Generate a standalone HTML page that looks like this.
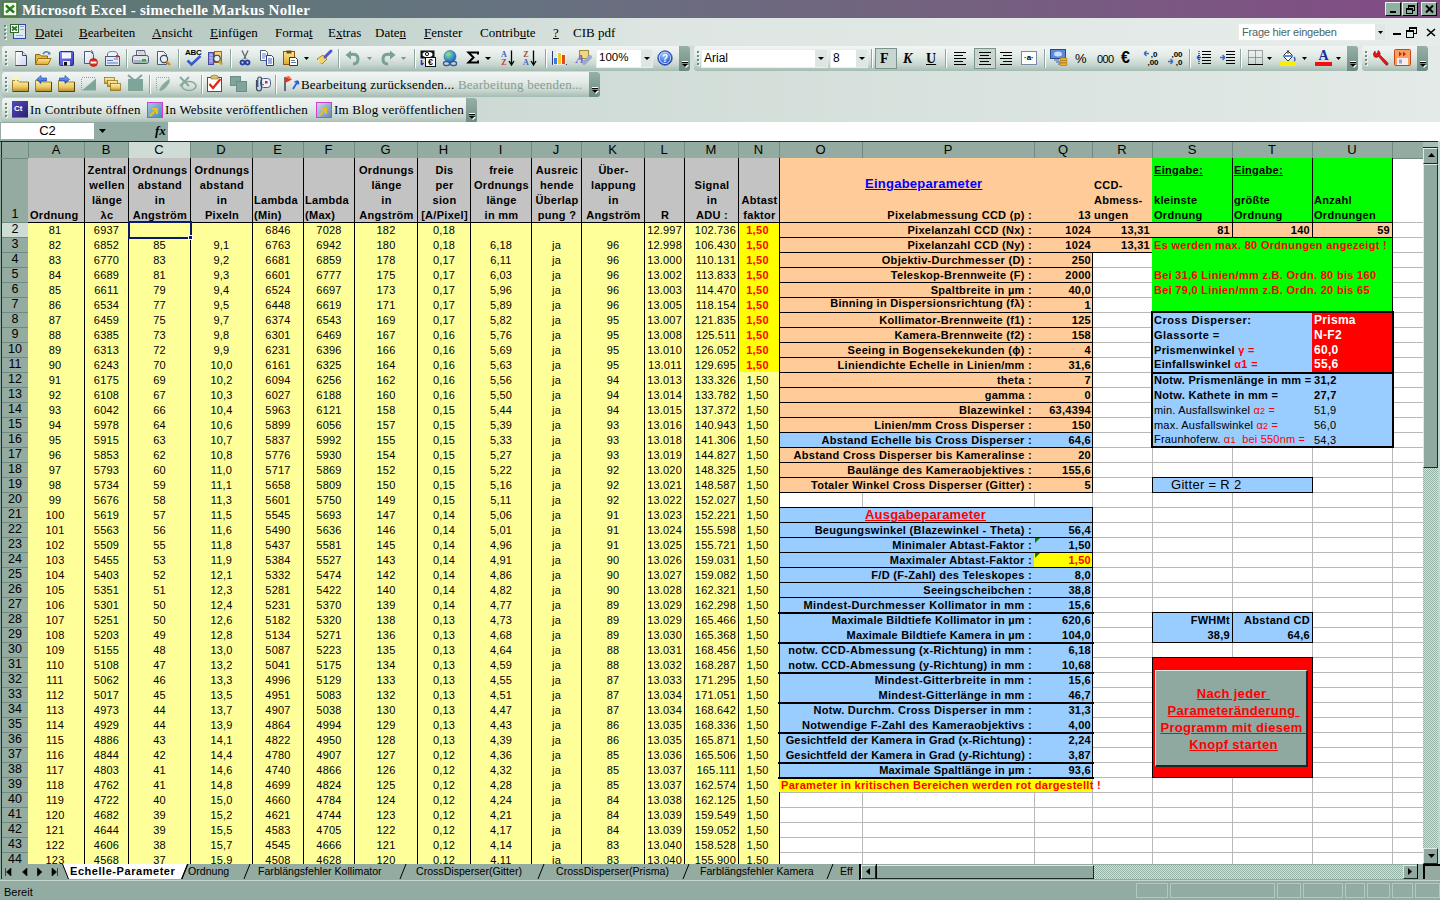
<!DOCTYPE html><html><head><meta charset="utf-8"><title>Excel</title><style>
*{margin:0;padding:0;box-sizing:border-box}
html,body{width:1440px;height:900px;overflow:hidden;background:#dfe7e3}
body{position:relative;font-family:"Liberation Sans",sans-serif;font-size:11px;color:#000}
div{position:absolute}
.t{height:15px;line-height:15px;white-space:nowrap;overflow:visible;letter-spacing:0.2px;margin-top:1px}
.b{font-weight:bold;letter-spacing:0.3px}
.ser{font-family:"Liberation Serif",serif}
.hdr{font-size:13px;text-align:center;height:17px;line-height:17px}
u{text-decoration:underline}
svg{position:absolute;overflow:visible}
</style></head><body>
<div style="left:0;top:0;width:1440px;height:18px;background:linear-gradient(90deg,#5b7a73 0%,#667280 35%,#73627f 65%,#834b85 100%)"></div>
<svg style="left:2px;top:1px" width="16" height="16"><rect x="1" y="1" width="14" height="14" fill="#f4fbef" stroke="#4a7a2a" stroke-width="1.6"/><path d="M4 4.5 L12 11.5 M12 4.5 L4 11.5" stroke="#2f8a2f" stroke-width="2.6"/><path d="M4 4.5 L12 11.5" stroke="#1e5e1e" stroke-width="1"/></svg>
<div class="ser" style="left:22px;top:1px;height:19px;line-height:19px;font-size:15px;font-weight:bold;color:#fff;letter-spacing:0.25px;white-space:nowrap">Microsoft Excel - simechelle Markus Noller</div>
<div style="left:1385px;top:2px;width:16px;height:14px;background:#8fb0a1;border-top:1px solid #e8f0ec;border-left:1px solid #e8f0ec;border-right:1px solid #000;border-bottom:1px solid #000"></div>
<div style="left:1402px;top:2px;width:16px;height:14px;background:#8fb0a1;border-top:1px solid #e8f0ec;border-left:1px solid #e8f0ec;border-right:1px solid #000;border-bottom:1px solid #000"></div>
<div style="left:1421px;top:2px;width:16px;height:14px;background:#8fb0a1;border-top:1px solid #e8f0ec;border-left:1px solid #e8f0ec;border-right:1px solid #000;border-bottom:1px solid #000"></div>
<div style="left:1390px;top:11px;width:6px;height:2px;background:#000"></div>
<svg style="left:1406px;top:5px" width="9" height="9"><rect x="2.5" y="0.5" width="6" height="5" fill="none" stroke="#000"/><rect x="0.5" y="3.5" width="6" height="5" fill="#8fb0a1" stroke="#000"/><path d="M2.5 1.5h6M0.5 4.5h6" stroke="#000"/></svg>
<svg style="left:1425px;top:5px" width="9" height="8"><path d="M1 0.5 L8 7.5 M8 0.5 L1 7.5" stroke="#000" stroke-width="2"/></svg>
<div style="left:0;top:19px;width:1440px;height:103px;background:linear-gradient(90deg,#bccdc6 0%,#d0dcd7 40%,#e3eae7 100%)"></div>
<div style="left:0;top:18px;width:1440px;height:28px;background:linear-gradient(90deg,#aec2b9 0%,#c4d3cd 25%,#dde6e2 45%,#e6ecea 100%)"></div>
<div style="left:5px;top:26px;width:2px;height:2px;background:#f4f8f6"></div>
<div style="left:4px;top:25px;width:2px;height:2px;background:#6f8c84"></div>
<div style="left:5px;top:30px;width:2px;height:2px;background:#f4f8f6"></div>
<div style="left:4px;top:29px;width:2px;height:2px;background:#6f8c84"></div>
<div style="left:5px;top:34px;width:2px;height:2px;background:#f4f8f6"></div>
<div style="left:4px;top:33px;width:2px;height:2px;background:#6f8c84"></div>
<div style="left:5px;top:38px;width:2px;height:2px;background:#f4f8f6"></div>
<div style="left:4px;top:37px;width:2px;height:2px;background:#6f8c84"></div>
<div style="left:13px;top:24px;width:13px;height:15px;background:#dfe6f8;border:1px solid #3346a0"></div>
<div style="left:10px;top:24px;width:9px;height:9px;background:#fff;border:1px solid #2d6a2d"></div>
<svg style="left:11px;top:25px" width="7" height="7"><path d="M1 1.5 L6 5.5 M6 1.5 L1 5.5" stroke="#2a7a2a" stroke-width="2"/></svg>
<div style="left:20px;top:26px;width:4px;height:1px;background:#a0a8d8"></div><div style="left:20px;top:29px;width:4px;height:1px;background:#a0a8d8"></div><div style="left:16px;top:35px;width:7px;height:1px;background:#a0a8d8"></div>
<div class="ser" style="left:35px;top:24px;height:17px;line-height:17px;font-size:13px;white-space:nowrap"><u>D</u>atei</div>
<div class="ser" style="left:79px;top:24px;height:17px;line-height:17px;font-size:13px;white-space:nowrap"><u>B</u>earbeiten</div>
<div class="ser" style="left:152px;top:24px;height:17px;line-height:17px;font-size:13px;white-space:nowrap"><u>A</u>nsicht</div>
<div class="ser" style="left:210px;top:24px;height:17px;line-height:17px;font-size:13px;white-space:nowrap"><u>E</u>infügen</div>
<div class="ser" style="left:275px;top:24px;height:17px;line-height:17px;font-size:13px;white-space:nowrap">Forma<u>t</u></div>
<div class="ser" style="left:328px;top:24px;height:17px;line-height:17px;font-size:13px;white-space:nowrap">E<u>x</u>tras</div>
<div class="ser" style="left:375px;top:24px;height:17px;line-height:17px;font-size:13px;white-space:nowrap">Date<u>n</u></div>
<div class="ser" style="left:424px;top:24px;height:17px;line-height:17px;font-size:13px;white-space:nowrap"><u>F</u>enster</div>
<div class="ser" style="left:480px;top:24px;height:17px;line-height:17px;font-size:13px;white-space:nowrap">Contrib<u>u</u>te</div>
<div class="ser" style="left:553px;top:24px;height:17px;line-height:17px;font-size:13px;white-space:nowrap"><u>?</u></div>
<div class="ser" style="left:573px;top:24px;height:17px;line-height:17px;font-size:13px;white-space:nowrap">CIB pdf</div>
<div style="left:1238px;top:23px;width:148px;height:18px;background:#fff;border:1px solid #e8eeeb"></div>
<div style="left:1375px;top:24px;width:10px;height:16px;background:#e0e8e4"></div>
<div style="left:1242px;top:23px;height:18px;line-height:18px;font-size:11px;letter-spacing:-0.2px;color:#4d6660;white-space:nowrap">Frage hier eingeben</div>
<svg style="left:1378px;top:31px" width="5" height="3"><path d="M0 0h5L2.5 3z" fill="#000"/></svg>
<div style="left:1393px;top:33px;width:8px;height:2px;background:#000"></div>
<svg style="left:1406px;top:27px" width="11" height="11"><rect x="3.5" y="0.5" width="7" height="6" fill="none" stroke="#000"/><rect x="0.5" y="3.5" width="7" height="7" fill="#e6ecea" stroke="#000"/><path d="M3.5 1.5h7M0.5 4.5h7" stroke="#000"/></svg>
<svg style="left:1426px;top:28px" width="10" height="9"><path d="M1 1 L9 8 M9 1 L1 8" stroke="#000" stroke-width="1.6"/></svg>
<div style="left:2px;top:46px;width:688px;height:25px;border-radius:3px;background:linear-gradient(180deg,#f1f5f3 0%,#e3ebe7 40%,#c7d6cf 75%,#a4bcb2 100%)"></div>
<div style="left:679px;top:46px;width:11px;height:25px;border-radius:0 3px 3px 0;background:linear-gradient(180deg,#97b0a7,#6c8c83)"></div>
<div style="left:682px;top:61px;width:6px;height:1px;background:#fff"></div>
<div style="left:682px;top:62px;width:6px;height:1px;background:#000"></div>
<svg style="left:682px;top:64px" width="7" height="5"><path d="M1 1h6L4 4z" fill="#fff"/><path d="M0 0h6L3 3z" fill="#000"/></svg>
<div style="left:6px;top:52px;width:2px;height:2px;background:#f4f8f6"></div>
<div style="left:5px;top:51px;width:2px;height:2px;background:#6f8c84"></div>
<div style="left:6px;top:56px;width:2px;height:2px;background:#f4f8f6"></div>
<div style="left:5px;top:55px;width:2px;height:2px;background:#6f8c84"></div>
<div style="left:6px;top:60px;width:2px;height:2px;background:#f4f8f6"></div>
<div style="left:5px;top:59px;width:2px;height:2px;background:#6f8c84"></div>
<div style="left:6px;top:64px;width:2px;height:2px;background:#f4f8f6"></div>
<div style="left:5px;top:63px;width:2px;height:2px;background:#6f8c84"></div>
<div style="left:694px;top:46px;width:664px;height:25px;border-radius:3px;background:linear-gradient(180deg,#f1f5f3 0%,#e3ebe7 40%,#c7d6cf 75%,#a4bcb2 100%)"></div>
<div style="left:1347px;top:46px;width:11px;height:25px;border-radius:0 3px 3px 0;background:linear-gradient(180deg,#97b0a7,#6c8c83)"></div>
<div style="left:1350px;top:61px;width:6px;height:1px;background:#fff"></div>
<div style="left:1350px;top:62px;width:6px;height:1px;background:#000"></div>
<svg style="left:1350px;top:64px" width="7" height="5"><path d="M1 1h6L4 4z" fill="#fff"/><path d="M0 0h6L3 3z" fill="#000"/></svg>
<div style="left:698px;top:52px;width:2px;height:2px;background:#f4f8f6"></div>
<div style="left:697px;top:51px;width:2px;height:2px;background:#6f8c84"></div>
<div style="left:698px;top:56px;width:2px;height:2px;background:#f4f8f6"></div>
<div style="left:697px;top:55px;width:2px;height:2px;background:#6f8c84"></div>
<div style="left:698px;top:60px;width:2px;height:2px;background:#f4f8f6"></div>
<div style="left:697px;top:59px;width:2px;height:2px;background:#6f8c84"></div>
<div style="left:698px;top:64px;width:2px;height:2px;background:#f4f8f6"></div>
<div style="left:697px;top:63px;width:2px;height:2px;background:#6f8c84"></div>
<div style="left:1362px;top:46px;width:66px;height:25px;border-radius:3px;background:linear-gradient(180deg,#f1f5f3 0%,#e3ebe7 40%,#c7d6cf 75%,#a4bcb2 100%)"></div>
<div style="left:1417px;top:46px;width:11px;height:25px;border-radius:0 3px 3px 0;background:linear-gradient(180deg,#97b0a7,#6c8c83)"></div>
<div style="left:1420px;top:61px;width:6px;height:1px;background:#fff"></div>
<div style="left:1420px;top:62px;width:6px;height:1px;background:#000"></div>
<svg style="left:1420px;top:64px" width="7" height="5"><path d="M1 1h6L4 4z" fill="#fff"/><path d="M0 0h6L3 3z" fill="#000"/></svg>
<div style="left:1366px;top:52px;width:2px;height:2px;background:#f4f8f6"></div>
<div style="left:1365px;top:51px;width:2px;height:2px;background:#6f8c84"></div>
<div style="left:1366px;top:56px;width:2px;height:2px;background:#f4f8f6"></div>
<div style="left:1365px;top:55px;width:2px;height:2px;background:#6f8c84"></div>
<div style="left:1366px;top:60px;width:2px;height:2px;background:#f4f8f6"></div>
<div style="left:1365px;top:59px;width:2px;height:2px;background:#6f8c84"></div>
<div style="left:1366px;top:64px;width:2px;height:2px;background:#f4f8f6"></div>
<div style="left:1365px;top:63px;width:2px;height:2px;background:#6f8c84"></div>
<div style="left:2px;top:72px;width:598px;height:25px;border-radius:3px;background:linear-gradient(180deg,#f1f5f3 0%,#e3ebe7 40%,#c7d6cf 75%,#a4bcb2 100%)"></div>
<div style="left:589px;top:72px;width:11px;height:25px;border-radius:0 3px 3px 0;background:linear-gradient(180deg,#97b0a7,#6c8c83)"></div>
<div style="left:592px;top:87px;width:6px;height:1px;background:#fff"></div>
<div style="left:592px;top:88px;width:6px;height:1px;background:#000"></div>
<svg style="left:592px;top:90px" width="7" height="5"><path d="M1 1h6L4 4z" fill="#fff"/><path d="M0 0h6L3 3z" fill="#000"/></svg>
<div style="left:6px;top:78px;width:2px;height:2px;background:#f4f8f6"></div>
<div style="left:5px;top:77px;width:2px;height:2px;background:#6f8c84"></div>
<div style="left:6px;top:82px;width:2px;height:2px;background:#f4f8f6"></div>
<div style="left:5px;top:81px;width:2px;height:2px;background:#6f8c84"></div>
<div style="left:6px;top:86px;width:2px;height:2px;background:#f4f8f6"></div>
<div style="left:5px;top:85px;width:2px;height:2px;background:#6f8c84"></div>
<div style="left:6px;top:90px;width:2px;height:2px;background:#f4f8f6"></div>
<div style="left:5px;top:89px;width:2px;height:2px;background:#6f8c84"></div>
<div style="left:2px;top:98px;width:475px;height:25px;border-radius:3px;background:linear-gradient(180deg,#f1f5f3 0%,#e3ebe7 40%,#c7d6cf 75%,#a4bcb2 100%)"></div>
<div style="left:466px;top:98px;width:11px;height:25px;border-radius:0 3px 3px 0;background:linear-gradient(180deg,#97b0a7,#6c8c83)"></div>
<div style="left:469px;top:113px;width:6px;height:1px;background:#fff"></div>
<div style="left:469px;top:114px;width:6px;height:1px;background:#000"></div>
<svg style="left:469px;top:116px" width="7" height="5"><path d="M1 1h6L4 4z" fill="#fff"/><path d="M0 0h6L3 3z" fill="#000"/></svg>
<div style="left:6px;top:104px;width:2px;height:2px;background:#f4f8f6"></div>
<div style="left:5px;top:103px;width:2px;height:2px;background:#6f8c84"></div>
<div style="left:6px;top:108px;width:2px;height:2px;background:#f4f8f6"></div>
<div style="left:5px;top:107px;width:2px;height:2px;background:#6f8c84"></div>
<div style="left:6px;top:112px;width:2px;height:2px;background:#f4f8f6"></div>
<div style="left:5px;top:111px;width:2px;height:2px;background:#6f8c84"></div>
<div style="left:6px;top:116px;width:2px;height:2px;background:#f4f8f6"></div>
<div style="left:5px;top:115px;width:2px;height:2px;background:#6f8c84"></div>
<svg style="left:0;top:0" width="0" height="0"><defs>
<linearGradient id="gdoc" x1="0" y1="0" x2="1" y2="1"><stop offset="0" stop-color="#ffffff"/><stop offset="1" stop-color="#cdd6ea"/></linearGradient>
<linearGradient id="gfold" x1="0" y1="0" x2="0" y2="1"><stop offset="0" stop-color="#ffe890"/><stop offset="1" stop-color="#e0a828"/></linearGradient>
<linearGradient id="gblue" x1="0" y1="0" x2="1" y2="1"><stop offset="0" stop-color="#8a8aff"/><stop offset="1" stop-color="#3a3ab0"/></linearGradient>
<radialGradient id="gglobe" cx="0.35" cy="0.3" r="0.8"><stop offset="0" stop-color="#a8e070"/><stop offset="0.5" stop-color="#3aa0d0"/><stop offset="1" stop-color="#1a50a0"/></radialGradient>
<radialGradient id="ghelp" cx="0.4" cy="0.3" r="0.8"><stop offset="0" stop-color="#9ac0ff"/><stop offset="1" stop-color="#0a3ac8"/></radialGradient>
</defs></svg>
<svg style="left:14px;top:51px" width="13" height="15" viewBox="0 0 13 15"><path d="M1.5 0.5H8.5L12.5 4.5V14.5H1.5Z" fill="url(#gdoc)" stroke="#3a4a66"/><path d="M8.5 0.5V4.5H12.5" fill="#e8eef8" stroke="#3a4a66"/><path d="M2 1V14" stroke="#fff"/></svg>
<svg style="left:34px;top:50px" width="18" height="16" viewBox="0 0 18 16"><path d="M1.5 4.5H6L7.5 6H13.5V14.5H1.5Z" fill="#e8b838" stroke="#8a6818"/><path d="M4 8.5H17L14 14.5H1.5Z" fill="url(#gfold)" stroke="#9a7018"/><path d="M9 4 Q12 0 15 3" stroke="#4a7ab0" stroke-width="1.6" fill="none"/><path d="M13.5 4.5L16.5 4.5 16 1.5Z" fill="#4a7ab0"/></svg>
<svg style="left:59px;top:51px" width="15" height="15" viewBox="0 0 15 15"><rect x="0.5" y="0.5" width="14" height="14" rx="1" fill="url(#gblue)" stroke="#2a2a90"/><rect x="3" y="1.5" width="9" height="6" fill="#f4f6ff"/><rect x="4" y="10" width="7" height="4.5" fill="#e8e8f0"/><rect x="5" y="11" width="3" height="3.5" fill="#111"/></svg>
<svg style="left:83px;top:50px" width="15" height="17" viewBox="0 0 15 17"><path d="M1.5 1.5H7.5L10.5 4.5V13.5H1.5Z" fill="url(#gdoc)" stroke="#4a5a78"/><path d="M8 0.5 Q10 1 10 4" stroke="#3a4a9a" fill="none"/><circle cx="10.5" cy="12.5" r="4" fill="#e02818" stroke="#a01010" stroke-width=".6"/><rect x="7.5" y="11.5" width="6" height="2" fill="#fff"/></svg>
<svg style="left:104px;top:50px" width="17" height="17" viewBox="0 0 17 17"><path d="M3.5 6.5V4 Q3.5 1.5 8.5 1.5 Q13.5 1.5 13.5 4V6.5" fill="#eef2f8" stroke="#6a7a98"/><rect x="1.5" y="6.5" width="14" height="9" fill="#e4eaf4" stroke="#4a5a80"/><rect x="12" y="5" width="2.5" height="2.5" fill="#e02020"/><path d="M3 10.5H9M3 13H14M10 9H14" stroke="#5a78b8"/></svg>
<div style="left:126px;top:49px;width:1px;height:19px;background:#8fa9a0"></div>
<div style="left:127px;top:49px;width:1px;height:19px;background:#fff"></div>
<svg style="left:132px;top:50px" width="17" height="16" viewBox="0 0 17 16"><path d="M4.5 0.5H12.5L13.5 5.5H4.5Z" fill="#fff" stroke="#5a6478"/><path d="M5.5 2H11.5M5.5 4H12" stroke="#8a96aa" stroke-width=".8"/><rect x="0.5" y="5.5" width="16" height="8" rx="2" fill="#dfe3ea" stroke="#4a5468"/><rect x="1.5" y="10" width="14" height="3" fill="#aab2c0"/><rect x="10" y="9" width="4" height="2.5" fill="#20c020"/></svg>
<svg style="left:156px;top:50px" width="17" height="17" viewBox="0 0 17 17"><path d="M1.5 1.5H7.5L10.5 4.5V14.5H1.5Z" fill="url(#gdoc)" stroke="#4a5a78"/><circle cx="8" cy="9" r="3.6" fill="#e8eef6" stroke="#404858" stroke-width="1.2"/><path d="M10.5 11.5L14 15" stroke="#e08a18" stroke-width="2.4"/></svg>
<div style="left:178px;top:49px;width:1px;height:19px;background:#8fa9a0"></div>
<div style="left:179px;top:49px;width:1px;height:19px;background:#fff"></div>
<div style="left:185px;top:49px;font-size:8px;font-weight:bold;line-height:8px;letter-spacing:-0.3px">ABC</div>
<svg style="left:186px;top:55px" width="16" height="11" viewBox="0 0 16 11"><path d="M1.5 5.5 L5.5 9.5 L14.5 1" stroke="#3a5ad0" stroke-width="2.6" fill="none"/></svg>
<svg style="left:207px;top:49px" width="17" height="17" viewBox="0 0 17 17"><rect x="1.5" y="3.5" width="5" height="12" fill="#8a8ae8" stroke="#4848a0"/><path d="M2.5 6H5.5M2.5 9H5.5M2.5 12H5.5" stroke="#d0d0ff"/><rect x="7.5" y="2.5" width="7" height="11" fill="#f0d080" stroke="#8a7030"/><circle cx="10" cy="9.5" r="3.2" fill="#e4ecf4" stroke="#3a4050" stroke-width="1.1"/><path d="M12 12L15 15.5" stroke="#c8a020" stroke-width="2.2"/></svg>
<div style="left:230px;top:49px;width:1px;height:19px;background:#8fa9a0"></div>
<div style="left:231px;top:49px;width:1px;height:19px;background:#fff"></div>
<svg style="left:239px;top:50px" width="12" height="16" viewBox="0 0 12 16"><path d="M3 0.5L7 9M9 0.5L5 9" stroke="#6a6a78" stroke-width="1.4"/><circle cx="3.5" cy="12.5" r="2.5" fill="#3050c0" stroke="#20308a"/><circle cx="8.5" cy="12.5" r="2.5" fill="#3050c0" stroke="#20308a"/><circle cx="3.5" cy="12.5" r="0.9" fill="#dde"/><circle cx="8.5" cy="12.5" r="0.9" fill="#dde"/></svg>
<svg style="left:259px;top:50px" width="17" height="16" viewBox="0 0 17 16"><path d="M1.5 0.5H6.5L8.5 2.5V10.5H1.5Z" fill="#fff" stroke="#4a5a80"/><path d="M3 4H7M3 6H7M3 8H6" stroke="#5a78c0"/><path d="M7.5 5.5H12.5L14.5 7.5V15.5H7.5Z" fill="#fff" stroke="#2a3a90"/><path d="M9 9H13M9 11H13M9 13H13" stroke="#3a5ac8"/></svg>
<svg style="left:283px;top:50px" width="16" height="17" viewBox="0 0 16 17"><rect x="0.5" y="1.5" width="11" height="13" fill="url(#gfold)" stroke="#8a5a10"/><rect x="3.5" y="0.5" width="5" height="3" fill="#6a4a18"/><path d="M6.5 7.5H12.5L14.5 9.5V15.5H6.5Z" fill="#fff" stroke="#303848"/><path d="M8 10.5H12M8 12.5H13" stroke="#6a7890"/></svg>
<svg style="left:304px;top:57px" width="5" height="3" viewBox="0 0 5 3"><path d="M0 0h5L2.5 3z" fill="#000"/></svg>
<svg style="left:316px;top:49px" width="18" height="17" viewBox="0 0 18 17"><path d="M1 10 L7 6 L11 10 L6 15 Z" fill="#f0d468" stroke="#a88a30"/><path d="M2 11L6 14" stroke="#fff2b0"/><path d="M9 8 L15 2" stroke="#5a50c8" stroke-width="3" stroke-linecap="round"/></svg>
<div style="left:338px;top:49px;width:1px;height:19px;background:#8fa9a0"></div>
<div style="left:339px;top:49px;width:1px;height:19px;background:#fff"></div>
<svg style="left:345px;top:50px" width="16" height="15" viewBox="0 0 16 15"><path d="M5 4.5 Q13 3 13 9 Q13 14 8 14" stroke="#7aa096" stroke-width="3" fill="none"/><path d="M0.5 5 L6 0.5 L6 9.5 Z" fill="#7aa096"/></svg>
<svg style="left:367px;top:57px" width="5" height="3" viewBox="0 0 5 3"><path d="M0 0h5L2.5 3z" fill="#7a968e"/></svg>
<svg style="left:380px;top:50px" width="16" height="15" viewBox="0 0 16 15"><path d="M11 4.5 Q3 3 3 9 Q3 14 8 14" stroke="#7aa096" stroke-width="3" fill="none"/><path d="M15.5 5 L10 0.5 L10 9.5 Z" fill="#7aa096"/></svg>
<svg style="left:401px;top:57px" width="5" height="3" viewBox="0 0 5 3"><path d="M0 0h5L2.5 3z" fill="#7a968e"/></svg>
<div style="left:414px;top:49px;width:1px;height:19px;background:#8fa9a0"></div>
<div style="left:415px;top:49px;width:1px;height:19px;background:#fff"></div>
<svg style="left:419px;top:50px" width="17" height="18" viewBox="0 0 17 18"><rect x="1.5" y="0.5" width="14" height="8" fill="#111"/><ellipse cx="8.5" cy="4.5" rx="5" ry="2.8" fill="#fff"/><circle cx="8" cy="4" r="1.6" fill="none" stroke="#111"/><rect x="6.5" y="7.5" width="10" height="9" fill="#fff" stroke="#111"/><text x="11.5" y="15" font-size="9" font-weight="bold" text-anchor="middle" font-family="Liberation Sans">€</text><path d="M2.5 10V15M2.5 15L4.5 13" stroke="#2030c0" stroke-width="1.5"/></svg>
<svg style="left:442px;top:50px" width="16" height="17" viewBox="0 0 16 17"><circle cx="8" cy="6.5" r="6" fill="url(#gglobe)" stroke="#2a5a90" stroke-width=".6"/><rect x="1.5" y="11.5" width="6" height="4" rx="2" fill="none" stroke="#3a5a98" stroke-width="1.4"/><rect x="8.5" y="11.5" width="6" height="4" rx="2" fill="none" stroke="#3a5a98" stroke-width="1.4"/></svg>
<svg style="left:467px;top:51px" width="12" height="13" viewBox="0 0 12 13"><path d="M11 3.5V1.5H1.5L6.5 6.5L1.5 11.5H11V9.5" stroke="#000" stroke-width="2" fill="none"/></svg>
<svg style="left:485px;top:57px" width="6" height="3" viewBox="0 0 6 3"><path d="M0 0h6L3 3z" fill="#000"/></svg>
<svg style="left:500px;top:50px" width="15" height="16" viewBox="0 0 15 16"><text x="4" y="7" font-size="8" font-weight="bold" text-anchor="middle" font-family="Liberation Serif" fill="#3a60c0">A</text><text x="4" y="15" font-size="8" font-weight="bold" text-anchor="middle" font-family="Liberation Serif" fill="#c03a3a">Z</text><path d="M11.5 0.5V14M9 11L11.5 15 14 11" stroke="#000" stroke-width="1.3" fill="none"/></svg>
<svg style="left:522px;top:50px" width="15" height="16" viewBox="0 0 15 16"><text x="4" y="7" font-size="8" font-weight="bold" text-anchor="middle" font-family="Liberation Serif" fill="#a04a40">Z</text><text x="4" y="15" font-size="8" font-weight="bold" text-anchor="middle" font-family="Liberation Serif" fill="#3a60c0">A</text><path d="M11.5 0.5V14M9 11L11.5 15 14 11" stroke="#000" stroke-width="1.3" fill="none"/></svg>
<div style="left:545px;top:49px;width:1px;height:19px;background:#8fa9a0"></div>
<div style="left:546px;top:49px;width:1px;height:19px;background:#fff"></div>
<svg style="left:551px;top:49px" width="17" height="17" viewBox="0 0 17 17"><path d="M1.5 2V15.5H16" stroke="#2a3a80" fill="none"/><rect x="2.5" y="8.5" width="4" height="7" fill="#3a7ae0" stroke="#fff" stroke-width=".8"/><rect x="6.5" y="3.5" width="4" height="12" fill="#f0c820" stroke="#fff" stroke-width=".8"/><rect x="10.5" y="5.5" width="4" height="10" fill="#e04a20" stroke="#fff" stroke-width=".8"/></svg>
<svg style="left:574px;top:49px" width="18" height="17" viewBox="0 0 18 17"><rect x="5.5" y="1.5" width="9" height="8" fill="#f0d880" stroke="#a08a40"/><text x="6" y="14" font-size="13" font-weight="bold" font-style="italic" text-anchor="middle" font-family="Liberation Serif" fill="#6a60d8">A</text><path d="M10 14 L16 8" stroke="#a0a8d0" stroke-width="4" stroke-linecap="round"/></svg>
<div style="left:596px;top:49px;width:57px;height:19px;background:#fff;border:1px solid #e8eeeb"></div>
<div style="left:641px;top:50px;width:11px;height:17px;background:#dde6e2"></div>
<div style="left:599px;top:48px;height:19px;line-height:19px;font-size:11.5px">100%</div>
<svg style="left:644px;top:57px" width="6" height="3"><path d="M0 0h6L3 3z" fill="#000"/></svg>
<svg style="left:657px;top:50px" width="16" height="16" viewBox="0 0 16 16"><circle cx="8" cy="8" r="7.2" fill="url(#ghelp)" stroke="#1a3a90" stroke-width=".8"/><circle cx="8" cy="8" r="5.6" fill="none" stroke="#c8dcff" stroke-width=".9"/><text x="8" y="12" font-size="10" font-weight="bold" text-anchor="middle" font-family="Liberation Sans" fill="#fff">?</text></svg>
<div style="left:701px;top:49px;width:127px;height:19px;background:#fff;border:1px solid #e8eeeb"></div>
<div style="left:815px;top:50px;width:12px;height:17px;background:#dde6e2"></div>
<div style="left:704px;top:49px;height:19px;line-height:19px;font-size:12px">Arial</div>
<svg style="left:818px;top:57px" width="6" height="3"><path d="M0 0h6L3 3z" fill="#000"/></svg>
<div style="left:830px;top:49px;width:38px;height:19px;background:#fff;border:1px solid #e8eeeb"></div>
<div style="left:856px;top:50px;width:11px;height:17px;background:#dde6e2"></div>
<div style="left:833px;top:49px;height:19px;line-height:19px;font-size:12px">8</div>
<svg style="left:859px;top:57px" width="6" height="3"><path d="M0 0h6L3 3z" fill="#000"/></svg>
<div style="left:871px;top:49px;width:1px;height:19px;background:#8fa9a0"></div>
<div style="left:872px;top:49px;width:1px;height:19px;background:#fff"></div>
<div style="left:875px;top:48px;width:22px;height:21px;background:#c9d6d0;border:1px solid #7a948c"></div>
<div class="ser" style="left:880px;top:49px;font-size:14px;font-weight:bold;line-height:19px">F</div>
<div class="ser" style="left:903px;top:49px;font-size:14px;font-weight:bold;font-style:italic;line-height:19px">K</div>
<div class="ser" style="left:926px;top:49px;font-size:14px;font-weight:bold;text-decoration:underline;line-height:19px">U</div>
<div style="left:945px;top:49px;width:1px;height:19px;background:#8fa9a0"></div>
<div style="left:946px;top:49px;width:1px;height:19px;background:#fff"></div>
<div style="left:954px;top:52px;width:12px;height:1px;background:#000"></div>
<div style="left:954px;top:55px;width:9px;height:1px;background:#000"></div>
<div style="left:954px;top:58px;width:12px;height:1px;background:#000"></div>
<div style="left:954px;top:61px;width:9px;height:1px;background:#000"></div>
<div style="left:954px;top:64px;width:12px;height:1px;background:#000"></div>
<div style="left:974px;top:48px;width:22px;height:21px;background:#c9d6d0;border:1px solid #7a948c"></div>
<div style="left:979px;top:52px;width:12px;height:1px;background:#000"></div>
<div style="left:980px;top:55px;width:9px;height:1px;background:#000"></div>
<div style="left:979px;top:58px;width:12px;height:1px;background:#000"></div>
<div style="left:980px;top:61px;width:9px;height:1px;background:#000"></div>
<div style="left:979px;top:64px;width:12px;height:1px;background:#000"></div>
<div style="left:1000px;top:52px;width:12px;height:1px;background:#000"></div>
<div style="left:1003px;top:55px;width:9px;height:1px;background:#000"></div>
<div style="left:1000px;top:58px;width:12px;height:1px;background:#000"></div>
<div style="left:1003px;top:61px;width:9px;height:1px;background:#000"></div>
<div style="left:1000px;top:64px;width:12px;height:1px;background:#000"></div>
<div style="left:1021px;top:51px;width:16px;height:14px;background:#fff;border:1px solid #7a8aa8"></div>
<div style="left:1024px;top:54px;font-size:8px;font-weight:bold;line-height:8px">·a·</div>
<div style="left:1044px;top:49px;width:1px;height:19px;background:#8fa9a0"></div>
<div style="left:1045px;top:49px;width:1px;height:19px;background:#fff"></div>
<svg style="left:1050px;top:49px" width="18" height="17" viewBox="0 0 18 17"><rect x="0.5" y="0.5" width="15" height="9" fill="#5a8ad8" stroke="#2a4a90"/><ellipse cx="8" cy="5" rx="4" ry="2.5" fill="#c8dcff"/><path d="M4 11H9M6 13H11M8 15H13" stroke="#3a5ab0"/><rect x="10" y="9" width="7" height="2.5" rx="1" fill="#f0b030" stroke="#a07010" stroke-width=".6"/><rect x="10" y="11.5" width="7" height="2.5" rx="1" fill="#f0b030" stroke="#a07010" stroke-width=".6"/><rect x="10" y="14" width="7" height="2.5" rx="1" fill="#f0b030" stroke="#a07010" stroke-width=".6"/></svg>
<div style="left:1075px;top:49px;font-size:13px;line-height:19px">%</div>
<div style="left:1097px;top:50px;font-size:11px;line-height:19px;letter-spacing:-0.6px">000</div>
<div style="left:1121px;top:48px;font-size:16px;font-weight:bold;line-height:19px">€</div>
<svg style="left:1143px;top:49px" width="18" height="17" viewBox="0 0 18 17"><text x="11" y="8" font-size="8" font-weight="bold" font-family="Liberation Sans" text-anchor="middle">,0</text><text x="10" y="16" font-size="8" font-weight="bold" font-family="Liberation Sans" text-anchor="middle">,00</text><path d="M1 4.5H6M1 4.5L3.5 2M1 4.5L3.5 7" stroke="#3a68c8" stroke-width="1.3" fill="none"/></svg>
<svg style="left:1167px;top:49px" width="18" height="17" viewBox="0 0 18 17"><text x="10" y="8" font-size="8" font-weight="bold" font-family="Liberation Sans" text-anchor="middle">,00</text><text x="12" y="16" font-size="8" font-weight="bold" font-family="Liberation Sans" text-anchor="middle">,0</text><path d="M1 12.5H6M6 12.5L3.5 10M6 12.5L3.5 15" stroke="#3a68c8" stroke-width="1.3" fill="none"/></svg>
<div style="left:1189px;top:49px;width:1px;height:19px;background:#8fa9a0"></div>
<div style="left:1190px;top:49px;width:1px;height:19px;background:#fff"></div>
<svg style="left:1196px;top:50px" width="16" height="15" viewBox="0 0 16 15"><path d="M6 1.5H15M6 4.5H15M6 7.5H15M6 10.5H15M6 13.5H15" stroke="#000"/><path d="M5 7.5H1M1 7.5L3.5 5M1 7.5L3.5 10" stroke="#3a68c8" stroke-width="1.4" fill="none"/><path d="M3 1V14" stroke="#000" stroke-dasharray="1 1"/></svg>
<svg style="left:1220px;top:50px" width="16" height="15" viewBox="0 0 16 15"><path d="M6 1.5H15M6 4.5H15M6 7.5H15M6 10.5H15M6 13.5H15" stroke="#000"/><path d="M0 7.5H5M5 7.5L2.5 5M5 7.5L2.5 10" stroke="#3a68c8" stroke-width="1.4" fill="none"/></svg>
<div style="left:1240px;top:49px;width:1px;height:19px;background:#8fa9a0"></div>
<div style="left:1241px;top:49px;width:1px;height:19px;background:#fff"></div>
<svg style="left:1248px;top:50px" width="15" height="15" viewBox="0 0 15 15"><path d="M0.5 0.5H14.5V14.5M0.5 0.5V14.5M7.5 0.5V14.5M0.5 7.5H14.5" stroke="#555" stroke-dasharray="1 1" fill="none"/><path d="M0 14.5H15" stroke="#000"/></svg>
<svg style="left:1267px;top:57px" width="5" height="3"><path d="M0 0h5L2.5 3z" fill="#000"/></svg>
<svg style="left:1280px;top:49px" width="17" height="17" viewBox="0 0 17 17"><path d="M3 7 L8 2 L13 7 L8 12 Z" fill="#fff" stroke="#333"/><path d="M3 7 H13" stroke="#5a8ad0" stroke-width="2"/><path d="M14 8 Q16 11 14 12" stroke="#3a68c8" stroke-width="1.5" fill="none"/><path d="M8 1V5" stroke="#333"/><rect x="0" y="13" width="16" height="4" fill="#f8f000"/></svg>
<svg style="left:1302px;top:57px" width="5" height="3"><path d="M0 0h5L2.5 3z" fill="#000"/></svg>
<svg style="left:1315px;top:48px" width="17" height="18" viewBox="0 0 17 18"><text x="8.5" y="12" font-size="14" font-weight="bold" font-family="Liberation Serif" text-anchor="middle" fill="#1a2a9a">A</text><rect x="0" y="14" width="17" height="4" fill="#f01010"/></svg>
<svg style="left:1336px;top:57px" width="5" height="3"><path d="M0 0h5L2.5 3z" fill="#000"/></svg>
<svg style="left:1371px;top:49px" width="18" height="18" viewBox="0 0 18 18"><path d="M4 2 Q1 5 3.5 8 Q6 9 7.5 7.5 L14.5 15.5 Q16 17 17 15.5 Q17.5 14 16 13 L9 6 Q10 3 7 1.5 L6.5 4.5 L4.5 4.5Z" fill="#e01818" stroke="#900" stroke-width=".6"/></svg>
<svg style="left:1394px;top:49px" width="17" height="17" viewBox="0 0 17 17"><rect x="0.5" y="0.5" width="16" height="16" rx="1" fill="#f8a060" stroke="#c04818"/><rect x="3" y="9" width="11" height="7" fill="#f4f0f0"/><rect x="5" y="10.5" width="3" height="4" fill="#a0a0c8"/><path d="M5 2.5L8 5 5 7.5Z M9 2.5L12 5 9 7.5Z" fill="#d02010"/></svg>
<svg style="left:0;top:0" width="0" height="0"><defs><linearGradient id="gfold2" x1="0" y1="0" x2="0" y2="1"><stop offset="0" stop-color="#fff0b0"/><stop offset="0.6" stop-color="#e8c860"/><stop offset="1" stop-color="#b08a28"/></linearGradient><linearGradient id="garr" x1="0" y1="0" x2="0" y2="1"><stop offset="0" stop-color="#8ab8ff"/><stop offset="1" stop-color="#1a50d8"/></linearGradient></defs></svg>
<svg style="left:12px;top:78px" width="17" height="14" viewBox="0 0 17 14"><path d="M0.5 2.5H6L7.5 4H16.5V13.5H0.5Z" fill="url(#gfold2)" stroke="#8a6818" stroke-width=".8"/><path d="M1 13.5H16.5V4" stroke="#5a4010" fill="none"/></svg>
<svg style="left:12px;top:75px" width="8" height="8" viewBox="0 0 8 8"><path d="M4 0L5 3 8 4 5 5 4 8 3 5 0 4 3 3Z" fill="#fff8a0"/></svg>
<svg style="left:35px;top:78px" width="17" height="14" viewBox="0 0 17 14"><path d="M0.5 2.5H6L7.5 4H16.5V13.5H0.5Z" fill="url(#gfold2)" stroke="#8a6818" stroke-width=".8"/><path d="M1 13.5H16.5V4" stroke="#5a4010" fill="none"/></svg>
<svg style="left:36px;top:75px" width="11" height="9" viewBox="0 0 11 9"><path d="M0.5 4.5L5 0.5V3H10.5V6H5V8.5Z" fill="url(#garr)" stroke="#1a3a90" stroke-width=".6"/></svg>
<svg style="left:58px;top:78px" width="17" height="14" viewBox="0 0 17 14"><path d="M0.5 2.5H6L7.5 4H16.5V13.5H0.5Z" fill="url(#gfold2)" stroke="#8a6818" stroke-width=".8"/><path d="M1 13.5H16.5V4" stroke="#5a4010" fill="none"/></svg>
<svg style="left:59px;top:75px" width="11" height="9" viewBox="0 0 11 9"><path d="M10.5 4.5L6 0.5V3H0.5V6H6V8.5Z" fill="url(#garr)" stroke="#1a3a90" stroke-width=".6"/></svg>
<svg style="left:81px;top:77px" width="16" height="14" viewBox="0 0 16 14"><path d="M1 13.5L15 1.5V13.5Z" fill="#7fa59a"/><path d="M0.5 13V1M1 0.5H15" stroke="#7fa59a" stroke-dasharray="1 1" fill="none"/></svg>
<svg style="left:104px;top:76px" width="18" height="16" viewBox="0 0 18 16"><rect x="0.5" y="1.5" width="10" height="6" fill="url(#gfold2)" stroke="#8a6818" stroke-width=".7"/><rect x="3.5" y="4.5" width="10" height="6" fill="url(#gfold2)" stroke="#8a6818" stroke-width=".7"/><rect x="6.5" y="7.5" width="10" height="7" fill="url(#gfold2)" stroke="#8a6818" stroke-width=".7"/></svg>
<svg style="left:127px;top:75px" width="17" height="17" viewBox="0 0 17 17"><rect x="1" y="4" width="15" height="12" fill="#7fa59a"/><path d="M1 0 L8 6 L15 0" stroke="#7fa59a" stroke-width="2" fill="none"/></svg>
<div style="left:149px;top:75px;width:1px;height:19px;background:#8fa9a0"></div>
<div style="left:150px;top:75px;width:1px;height:19px;background:#fff"></div>
<svg style="left:155px;top:76px" width="18" height="16" viewBox="0 0 18 16"><path d="M1.5 14V1.5H14V8" stroke="#8aa89e" stroke-dasharray="1 1" fill="none"/><path d="M4 14 Q8 6 15 3 Q14 11 6 15Z" fill="#8aa89e"/></svg>
<svg style="left:178px;top:75px" width="19" height="17" viewBox="0 0 19 17"><path d="M2 2 L11 11 M11 2 L2 11" stroke="#8aa89e" stroke-width="2"/><ellipse cx="11" cy="11" rx="7" ry="4.5" fill="none" stroke="#8aa89e" stroke-width="1.6"/></svg>
<div style="left:201px;top:75px;width:1px;height:19px;background:#8fa9a0"></div>
<div style="left:202px;top:75px;width:1px;height:19px;background:#fff"></div>
<svg style="left:207px;top:75px" width="16" height="17" viewBox="0 0 16 17"><rect x="0.5" y="2.5" width="14" height="14" fill="#fff" stroke="#3a4aa0"/><path d="M4 1 Q7.5 -1 11 1V4H4Z" fill="#e0c070" stroke="#8a6a20" stroke-width=".6"/><path d="M2.5 9 L6 13 L13.5 4" stroke="#e02818" stroke-width="2.2" fill="none"/></svg>
<svg style="left:230px;top:76px" width="18" height="16" viewBox="0 0 18 16"><rect x="0.5" y="0.5" width="10" height="9" fill="#7fa59a" stroke="#6a9086"/><rect x="6.5" y="5.5" width="10" height="10" fill="#7fa59a" stroke="#6a9086"/></svg>
<svg style="left:253px;top:75px" width="18" height="17" viewBox="0 0 18 17"><rect x="7.5" y="3.5" width="10" height="9" rx="3" fill="#eef2fa" stroke="#4a5a80"/><rect x="12" y="6" width="2.5" height="2.5" fill="#e02020"/><path d="M8.5 10Q10 9 11 10" stroke="#4a5a80" fill="none"/><path d="M3.5 5V13Q3.5 16 6 16Q8.5 16 8.5 13V4Q8.5 2 6.5 2Q4.8 2 4.8 4V12" stroke="#3a4a6a" stroke-width="1.2" fill="none"/></svg>
<div style="left:275px;top:75px;width:1px;height:19px;background:#8fa9a0"></div>
<div style="left:276px;top:75px;width:1px;height:19px;background:#fff"></div>
<svg style="left:282px;top:75px" width="18" height="17" viewBox="0 0 18 17"><path d="M3 2 V16" stroke="#2a2a40" stroke-width="1.3"/><path d="M3 2 L10 4.5 L3 8Z" fill="#e83020"/><path d="M3 2 L7 1 L10 4.5" fill="#ff6040"/><path d="M11 14 L16 6 M16 6 L12.5 7 M16 6 L16.5 9.5" stroke="#2a60e0" stroke-width="1.8" fill="none"/></svg>
<div class="ser" style="left:301px;top:75px;height:19px;line-height:19px;font-size:13px;letter-spacing:0.2px;white-space:nowrap">Bearbeitung zurücksenden...</div>
<div class="ser" style="left:458px;top:75px;height:19px;line-height:19px;font-size:13px;letter-spacing:0.2px;white-space:nowrap;color:#869c95">Bearbeitung beenden...</div>
<div style="left:12px;top:101px;width:16px;height:17px;background:linear-gradient(135deg,#5a4ab8,#2a2070);border-bottom:1px solid #f020f0"></div>
<div style="left:14px;top:103px;font-size:8px;font-weight:bold;color:#fff;line-height:12px">Ct</div>
<div class="ser" style="left:30px;top:100px;height:19px;line-height:19px;font-size:13px;letter-spacing:0.2px;white-space:nowrap">In Contribute öffnen</div>
<div style="left:147px;top:102px;width:16px;height:16px;background:linear-gradient(135deg,#a0c8e8,#4a88b8);border:1px solid #d040d0"></div>
<svg style="left:149px;top:107px" width="10" height="10"><path d="M1 9 L8 2 M3 2 H8 V7" stroke="#e8c020" stroke-width="2.2" fill="none"/></svg>
<div class="ser" style="left:165px;top:100px;height:19px;line-height:19px;font-size:13px;letter-spacing:0.2px;white-space:nowrap">In Website veröffentlichen</div>
<div style="left:316px;top:102px;width:16px;height:16px;background:linear-gradient(135deg,#c8d8e8,#6a8ab8);border:1px solid #d040d0"></div>
<svg style="left:318px;top:107px" width="10" height="10"><path d="M1 9 L8 2 M3 2 H8 V7" stroke="#e8c020" stroke-width="2.2" fill="none"/></svg>
<div class="ser" style="left:334px;top:100px;height:19px;line-height:19px;font-size:13px;letter-spacing:0.2px;white-space:nowrap">Im Blog veröffentlichen</div>
<div style="left:0;top:122px;width:1440px;height:19px;background:#93aca3"></div>
<div style="left:1px;top:123px;width:93px;height:16px;background:#fff"></div>
<div style="left:1px;top:123px;width:93px;height:16px;line-height:16px;text-align:center;font-size:13px">C2</div>
<svg style="left:99px;top:129px" width="7" height="4"><path d="M0 0h7L3.5 4z" fill="#000"/></svg>
<div class="ser" style="left:155px;top:122px;height:17px;line-height:17px;font-size:13px;font-style:italic;font-weight:bold">fx</div>
<div style="left:168px;top:122px;width:1272px;height:19px;background:#fff"></div>
<div style="left:0px;top:141px;width:1423px;height:723px;background:#93aba1"></div>
<div style="left:0;top:141px;width:1438px;height:1px;background:#1a2a26"></div>
<div style="left:1438px;top:141px;width:2px;height:723px;background:#c0d8ce"></div>
<div style="left:1px;top:141px;width:1px;height:723px;background:#1a2a26"></div>
<div style="left:28px;top:158px;width:1395px;height:706px;background:#fff"></div>
<div style="left:84px;top:158px;width:1px;height:706px;background:#b8b8b8"></div>
<div style="left:128px;top:158px;width:1px;height:706px;background:#b8b8b8"></div>
<div style="left:190px;top:158px;width:1px;height:706px;background:#b8b8b8"></div>
<div style="left:252px;top:158px;width:1px;height:706px;background:#b8b8b8"></div>
<div style="left:303px;top:158px;width:1px;height:706px;background:#b8b8b8"></div>
<div style="left:354px;top:158px;width:1px;height:706px;background:#b8b8b8"></div>
<div style="left:417px;top:158px;width:1px;height:706px;background:#b8b8b8"></div>
<div style="left:470px;top:158px;width:1px;height:706px;background:#b8b8b8"></div>
<div style="left:531px;top:158px;width:1px;height:706px;background:#b8b8b8"></div>
<div style="left:581px;top:158px;width:1px;height:706px;background:#b8b8b8"></div>
<div style="left:644px;top:158px;width:1px;height:706px;background:#b8b8b8"></div>
<div style="left:684px;top:158px;width:1px;height:706px;background:#b8b8b8"></div>
<div style="left:738px;top:158px;width:1px;height:706px;background:#b8b8b8"></div>
<div style="left:779px;top:158px;width:1px;height:706px;background:#b8b8b8"></div>
<div style="left:862px;top:158px;width:1px;height:706px;background:#b8b8b8"></div>
<div style="left:1034px;top:158px;width:1px;height:706px;background:#b8b8b8"></div>
<div style="left:1092px;top:158px;width:1px;height:706px;background:#b8b8b8"></div>
<div style="left:1152px;top:158px;width:1px;height:706px;background:#b8b8b8"></div>
<div style="left:1232px;top:158px;width:1px;height:706px;background:#b8b8b8"></div>
<div style="left:1312px;top:158px;width:1px;height:706px;background:#b8b8b8"></div>
<div style="left:1392px;top:158px;width:1px;height:706px;background:#b8b8b8"></div>
<div style="left:1423px;top:158px;width:1px;height:706px;background:#b8b8b8"></div>
<div style="left:28px;top:222px;width:1395px;height:1px;background:#b8b8b8"></div>
<div style="left:28px;top:237px;width:1395px;height:1px;background:#b8b8b8"></div>
<div style="left:28px;top:252px;width:1395px;height:1px;background:#b8b8b8"></div>
<div style="left:28px;top:267px;width:1395px;height:1px;background:#b8b8b8"></div>
<div style="left:28px;top:282px;width:1395px;height:1px;background:#b8b8b8"></div>
<div style="left:28px;top:297px;width:1395px;height:1px;background:#b8b8b8"></div>
<div style="left:28px;top:312px;width:1395px;height:1px;background:#b8b8b8"></div>
<div style="left:28px;top:327px;width:1395px;height:1px;background:#b8b8b8"></div>
<div style="left:28px;top:342px;width:1395px;height:1px;background:#b8b8b8"></div>
<div style="left:28px;top:357px;width:1395px;height:1px;background:#b8b8b8"></div>
<div style="left:28px;top:372px;width:1395px;height:1px;background:#b8b8b8"></div>
<div style="left:28px;top:387px;width:1395px;height:1px;background:#b8b8b8"></div>
<div style="left:28px;top:402px;width:1395px;height:1px;background:#b8b8b8"></div>
<div style="left:28px;top:417px;width:1395px;height:1px;background:#b8b8b8"></div>
<div style="left:28px;top:432px;width:1395px;height:1px;background:#b8b8b8"></div>
<div style="left:28px;top:447px;width:1395px;height:1px;background:#b8b8b8"></div>
<div style="left:28px;top:462px;width:1395px;height:1px;background:#b8b8b8"></div>
<div style="left:28px;top:477px;width:1395px;height:1px;background:#b8b8b8"></div>
<div style="left:28px;top:492px;width:1395px;height:1px;background:#b8b8b8"></div>
<div style="left:28px;top:507px;width:1395px;height:1px;background:#b8b8b8"></div>
<div style="left:28px;top:522px;width:1395px;height:1px;background:#b8b8b8"></div>
<div style="left:28px;top:537px;width:1395px;height:1px;background:#b8b8b8"></div>
<div style="left:28px;top:552px;width:1395px;height:1px;background:#b8b8b8"></div>
<div style="left:28px;top:567px;width:1395px;height:1px;background:#b8b8b8"></div>
<div style="left:28px;top:582px;width:1395px;height:1px;background:#b8b8b8"></div>
<div style="left:28px;top:597px;width:1395px;height:1px;background:#b8b8b8"></div>
<div style="left:28px;top:612px;width:1395px;height:1px;background:#b8b8b8"></div>
<div style="left:28px;top:627px;width:1395px;height:1px;background:#b8b8b8"></div>
<div style="left:28px;top:642px;width:1395px;height:1px;background:#b8b8b8"></div>
<div style="left:28px;top:657px;width:1395px;height:1px;background:#b8b8b8"></div>
<div style="left:28px;top:672px;width:1395px;height:1px;background:#b8b8b8"></div>
<div style="left:28px;top:687px;width:1395px;height:1px;background:#b8b8b8"></div>
<div style="left:28px;top:702px;width:1395px;height:1px;background:#b8b8b8"></div>
<div style="left:28px;top:717px;width:1395px;height:1px;background:#b8b8b8"></div>
<div style="left:28px;top:732px;width:1395px;height:1px;background:#b8b8b8"></div>
<div style="left:28px;top:747px;width:1395px;height:1px;background:#b8b8b8"></div>
<div style="left:28px;top:762px;width:1395px;height:1px;background:#b8b8b8"></div>
<div style="left:28px;top:777px;width:1395px;height:1px;background:#b8b8b8"></div>
<div style="left:28px;top:792px;width:1395px;height:1px;background:#b8b8b8"></div>
<div style="left:28px;top:807px;width:1395px;height:1px;background:#b8b8b8"></div>
<div style="left:28px;top:822px;width:1395px;height:1px;background:#b8b8b8"></div>
<div style="left:28px;top:837px;width:1395px;height:1px;background:#b8b8b8"></div>
<div style="left:28px;top:852px;width:1395px;height:1px;background:#b8b8b8"></div>
<div style="left:28px;top:142px;width:1px;height:16px;background:#6f8a80"></div>
<div style="left:84px;top:142px;width:1px;height:16px;background:#6f8a80"></div>
<div style="left:128px;top:142px;width:1px;height:16px;background:#6f8a80"></div>
<div style="left:190px;top:142px;width:1px;height:16px;background:#6f8a80"></div>
<div style="left:252px;top:142px;width:1px;height:16px;background:#6f8a80"></div>
<div style="left:303px;top:142px;width:1px;height:16px;background:#6f8a80"></div>
<div style="left:354px;top:142px;width:1px;height:16px;background:#6f8a80"></div>
<div style="left:417px;top:142px;width:1px;height:16px;background:#6f8a80"></div>
<div style="left:470px;top:142px;width:1px;height:16px;background:#6f8a80"></div>
<div style="left:531px;top:142px;width:1px;height:16px;background:#6f8a80"></div>
<div style="left:581px;top:142px;width:1px;height:16px;background:#6f8a80"></div>
<div style="left:644px;top:142px;width:1px;height:16px;background:#6f8a80"></div>
<div style="left:684px;top:142px;width:1px;height:16px;background:#6f8a80"></div>
<div style="left:738px;top:142px;width:1px;height:16px;background:#6f8a80"></div>
<div style="left:779px;top:142px;width:1px;height:16px;background:#6f8a80"></div>
<div style="left:862px;top:142px;width:1px;height:16px;background:#6f8a80"></div>
<div style="left:1034px;top:142px;width:1px;height:16px;background:#6f8a80"></div>
<div style="left:1092px;top:142px;width:1px;height:16px;background:#6f8a80"></div>
<div style="left:1152px;top:142px;width:1px;height:16px;background:#6f8a80"></div>
<div style="left:1232px;top:142px;width:1px;height:16px;background:#6f8a80"></div>
<div style="left:1312px;top:142px;width:1px;height:16px;background:#6f8a80"></div>
<div style="left:1392px;top:142px;width:1px;height:16px;background:#6f8a80"></div>
<div style="left:1423px;top:142px;width:1px;height:16px;background:#6f8a80"></div>
<div style="left:0px;top:158px;width:1423px;height:1px;background:#6f8a80"></div>
<div style="left:2px;top:222px;width:26px;height:1px;background:#6f8a80"></div>
<div style="left:2px;top:237px;width:26px;height:1px;background:#6f8a80"></div>
<div style="left:2px;top:252px;width:26px;height:1px;background:#6f8a80"></div>
<div style="left:2px;top:267px;width:26px;height:1px;background:#6f8a80"></div>
<div style="left:2px;top:282px;width:26px;height:1px;background:#6f8a80"></div>
<div style="left:2px;top:297px;width:26px;height:1px;background:#6f8a80"></div>
<div style="left:2px;top:312px;width:26px;height:1px;background:#6f8a80"></div>
<div style="left:2px;top:327px;width:26px;height:1px;background:#6f8a80"></div>
<div style="left:2px;top:342px;width:26px;height:1px;background:#6f8a80"></div>
<div style="left:2px;top:357px;width:26px;height:1px;background:#6f8a80"></div>
<div style="left:2px;top:372px;width:26px;height:1px;background:#6f8a80"></div>
<div style="left:2px;top:387px;width:26px;height:1px;background:#6f8a80"></div>
<div style="left:2px;top:402px;width:26px;height:1px;background:#6f8a80"></div>
<div style="left:2px;top:417px;width:26px;height:1px;background:#6f8a80"></div>
<div style="left:2px;top:432px;width:26px;height:1px;background:#6f8a80"></div>
<div style="left:2px;top:447px;width:26px;height:1px;background:#6f8a80"></div>
<div style="left:2px;top:462px;width:26px;height:1px;background:#6f8a80"></div>
<div style="left:2px;top:477px;width:26px;height:1px;background:#6f8a80"></div>
<div style="left:2px;top:492px;width:26px;height:1px;background:#6f8a80"></div>
<div style="left:2px;top:507px;width:26px;height:1px;background:#6f8a80"></div>
<div style="left:2px;top:522px;width:26px;height:1px;background:#6f8a80"></div>
<div style="left:2px;top:537px;width:26px;height:1px;background:#6f8a80"></div>
<div style="left:2px;top:552px;width:26px;height:1px;background:#6f8a80"></div>
<div style="left:2px;top:567px;width:26px;height:1px;background:#6f8a80"></div>
<div style="left:2px;top:582px;width:26px;height:1px;background:#6f8a80"></div>
<div style="left:2px;top:597px;width:26px;height:1px;background:#6f8a80"></div>
<div style="left:2px;top:612px;width:26px;height:1px;background:#6f8a80"></div>
<div style="left:2px;top:627px;width:26px;height:1px;background:#6f8a80"></div>
<div style="left:2px;top:642px;width:26px;height:1px;background:#6f8a80"></div>
<div style="left:2px;top:657px;width:26px;height:1px;background:#6f8a80"></div>
<div style="left:2px;top:672px;width:26px;height:1px;background:#6f8a80"></div>
<div style="left:2px;top:687px;width:26px;height:1px;background:#6f8a80"></div>
<div style="left:2px;top:702px;width:26px;height:1px;background:#6f8a80"></div>
<div style="left:2px;top:717px;width:26px;height:1px;background:#6f8a80"></div>
<div style="left:2px;top:732px;width:26px;height:1px;background:#6f8a80"></div>
<div style="left:2px;top:747px;width:26px;height:1px;background:#6f8a80"></div>
<div style="left:2px;top:762px;width:26px;height:1px;background:#6f8a80"></div>
<div style="left:2px;top:777px;width:26px;height:1px;background:#6f8a80"></div>
<div style="left:2px;top:792px;width:26px;height:1px;background:#6f8a80"></div>
<div style="left:2px;top:807px;width:26px;height:1px;background:#6f8a80"></div>
<div style="left:2px;top:822px;width:26px;height:1px;background:#6f8a80"></div>
<div style="left:2px;top:837px;width:26px;height:1px;background:#6f8a80"></div>
<div style="left:2px;top:852px;width:26px;height:1px;background:#6f8a80"></div>
<div style="left:129px;top:142px;width:61px;height:16px;background:#cfdcd6"></div>
<div style="left:2px;top:223px;width:26px;height:14px;background:#cfdcd6"></div>
<div class="hdr" style="left:28px;top:141px;width:56px">A</div>
<div class="hdr" style="left:84px;top:141px;width:44px">B</div>
<div class="hdr" style="left:128px;top:141px;width:62px">C</div>
<div class="hdr" style="left:190px;top:141px;width:62px">D</div>
<div class="hdr" style="left:252px;top:141px;width:51px">E</div>
<div class="hdr" style="left:303px;top:141px;width:51px">F</div>
<div class="hdr" style="left:354px;top:141px;width:63px">G</div>
<div class="hdr" style="left:417px;top:141px;width:53px">H</div>
<div class="hdr" style="left:470px;top:141px;width:61px">I</div>
<div class="hdr" style="left:531px;top:141px;width:50px">J</div>
<div class="hdr" style="left:581px;top:141px;width:63px">K</div>
<div class="hdr" style="left:644px;top:141px;width:40px">L</div>
<div class="hdr" style="left:684px;top:141px;width:54px">M</div>
<div class="hdr" style="left:738px;top:141px;width:41px">N</div>
<div class="hdr" style="left:779px;top:141px;width:83px">O</div>
<div class="hdr" style="left:862px;top:141px;width:172px">P</div>
<div class="hdr" style="left:1034px;top:141px;width:58px">Q</div>
<div class="hdr" style="left:1092px;top:141px;width:60px">R</div>
<div class="hdr" style="left:1152px;top:141px;width:80px">S</div>
<div class="hdr" style="left:1232px;top:141px;width:80px">T</div>
<div class="hdr" style="left:1312px;top:141px;width:80px">U</div>
<div class="hdr" style="left:2px;top:206px;width:26px;height:16px;line-height:16px;font-size:12.5px">1</div>
<div class="hdr" style="left:2px;top:221px;width:26px;height:16px;line-height:16px;font-size:12.5px">2</div>
<div class="hdr" style="left:2px;top:236px;width:26px;height:16px;line-height:16px;font-size:12.5px">3</div>
<div class="hdr" style="left:2px;top:251px;width:26px;height:16px;line-height:16px;font-size:12.5px">4</div>
<div class="hdr" style="left:2px;top:266px;width:26px;height:16px;line-height:16px;font-size:12.5px">5</div>
<div class="hdr" style="left:2px;top:281px;width:26px;height:16px;line-height:16px;font-size:12.5px">6</div>
<div class="hdr" style="left:2px;top:296px;width:26px;height:16px;line-height:16px;font-size:12.5px">7</div>
<div class="hdr" style="left:2px;top:311px;width:26px;height:16px;line-height:16px;font-size:12.5px">8</div>
<div class="hdr" style="left:2px;top:326px;width:26px;height:16px;line-height:16px;font-size:12.5px">9</div>
<div class="hdr" style="left:2px;top:341px;width:26px;height:16px;line-height:16px;font-size:12.5px">10</div>
<div class="hdr" style="left:2px;top:356px;width:26px;height:16px;line-height:16px;font-size:12.5px">11</div>
<div class="hdr" style="left:2px;top:371px;width:26px;height:16px;line-height:16px;font-size:12.5px">12</div>
<div class="hdr" style="left:2px;top:386px;width:26px;height:16px;line-height:16px;font-size:12.5px">13</div>
<div class="hdr" style="left:2px;top:401px;width:26px;height:16px;line-height:16px;font-size:12.5px">14</div>
<div class="hdr" style="left:2px;top:416px;width:26px;height:16px;line-height:16px;font-size:12.5px">15</div>
<div class="hdr" style="left:2px;top:431px;width:26px;height:16px;line-height:16px;font-size:12.5px">16</div>
<div class="hdr" style="left:2px;top:446px;width:26px;height:16px;line-height:16px;font-size:12.5px">17</div>
<div class="hdr" style="left:2px;top:461px;width:26px;height:16px;line-height:16px;font-size:12.5px">18</div>
<div class="hdr" style="left:2px;top:476px;width:26px;height:16px;line-height:16px;font-size:12.5px">19</div>
<div class="hdr" style="left:2px;top:491px;width:26px;height:16px;line-height:16px;font-size:12.5px">20</div>
<div class="hdr" style="left:2px;top:506px;width:26px;height:16px;line-height:16px;font-size:12.5px">21</div>
<div class="hdr" style="left:2px;top:521px;width:26px;height:16px;line-height:16px;font-size:12.5px">22</div>
<div class="hdr" style="left:2px;top:536px;width:26px;height:16px;line-height:16px;font-size:12.5px">23</div>
<div class="hdr" style="left:2px;top:551px;width:26px;height:16px;line-height:16px;font-size:12.5px">24</div>
<div class="hdr" style="left:2px;top:566px;width:26px;height:16px;line-height:16px;font-size:12.5px">25</div>
<div class="hdr" style="left:2px;top:581px;width:26px;height:16px;line-height:16px;font-size:12.5px">26</div>
<div class="hdr" style="left:2px;top:596px;width:26px;height:16px;line-height:16px;font-size:12.5px">27</div>
<div class="hdr" style="left:2px;top:611px;width:26px;height:16px;line-height:16px;font-size:12.5px">28</div>
<div class="hdr" style="left:2px;top:626px;width:26px;height:16px;line-height:16px;font-size:12.5px">29</div>
<div class="hdr" style="left:2px;top:641px;width:26px;height:16px;line-height:16px;font-size:12.5px">30</div>
<div class="hdr" style="left:2px;top:656px;width:26px;height:16px;line-height:16px;font-size:12.5px">31</div>
<div class="hdr" style="left:2px;top:671px;width:26px;height:16px;line-height:16px;font-size:12.5px">32</div>
<div class="hdr" style="left:2px;top:686px;width:26px;height:16px;line-height:16px;font-size:12.5px">33</div>
<div class="hdr" style="left:2px;top:701px;width:26px;height:16px;line-height:16px;font-size:12.5px">34</div>
<div class="hdr" style="left:2px;top:716px;width:26px;height:16px;line-height:16px;font-size:12.5px">35</div>
<div class="hdr" style="left:2px;top:731px;width:26px;height:16px;line-height:16px;font-size:12.5px">36</div>
<div class="hdr" style="left:2px;top:746px;width:26px;height:16px;line-height:16px;font-size:12.5px">37</div>
<div class="hdr" style="left:2px;top:761px;width:26px;height:16px;line-height:16px;font-size:12.5px">38</div>
<div class="hdr" style="left:2px;top:776px;width:26px;height:16px;line-height:16px;font-size:12.5px">39</div>
<div class="hdr" style="left:2px;top:791px;width:26px;height:16px;line-height:16px;font-size:12.5px">40</div>
<div class="hdr" style="left:2px;top:806px;width:26px;height:16px;line-height:16px;font-size:12.5px">41</div>
<div class="hdr" style="left:2px;top:821px;width:26px;height:16px;line-height:16px;font-size:12.5px">42</div>
<div class="hdr" style="left:2px;top:836px;width:26px;height:16px;line-height:16px;font-size:12.5px">43</div>
<div class="hdr" style="left:2px;top:851px;width:26px;height:16px;line-height:16px;font-size:12.5px">44</div>
<div style="left:28px;top:158px;width:751px;height:64px;background:#c3c3c3"></div>
<div style="left:28px;top:222px;width:751px;height:642px;background:#ffff99"></div>
<div style="left:738px;top:223px;width:41px;height:149px;background:#ffff00"></div>
<div style="left:84px;top:158px;width:1px;height:706px;background:#000"></div>
<div style="left:128px;top:158px;width:1px;height:706px;background:#000"></div>
<div style="left:190px;top:158px;width:1px;height:706px;background:#000"></div>
<div style="left:252px;top:158px;width:1px;height:706px;background:#000"></div>
<div style="left:303px;top:158px;width:1px;height:706px;background:#000"></div>
<div style="left:354px;top:158px;width:1px;height:706px;background:#000"></div>
<div style="left:417px;top:158px;width:1px;height:706px;background:#000"></div>
<div style="left:470px;top:158px;width:1px;height:706px;background:#000"></div>
<div style="left:531px;top:158px;width:1px;height:706px;background:#000"></div>
<div style="left:581px;top:158px;width:1px;height:706px;background:#000"></div>
<div style="left:644px;top:158px;width:1px;height:706px;background:#000"></div>
<div style="left:684px;top:158px;width:1px;height:706px;background:#000"></div>
<div style="left:738px;top:158px;width:1px;height:706px;background:#000"></div>
<div style="left:779px;top:158px;width:1px;height:706px;background:#000"></div>
<div style="left:28px;top:222px;width:751px;height:1px;background:#000"></div>
<div class="t b" style="left:30px;top:207px;width:55px;text-align:left;">Ordnung</div>
<div class="t b" style="left:85px;top:162px;width:44px;text-align:center;">Zentral</div>
<div class="t b" style="left:85px;top:177px;width:44px;text-align:center;">wellen</div>
<div class="t b" style="left:85px;top:192px;width:44px;text-align:center;">länge</div>
<div class="t b" style="left:85px;top:207px;width:44px;text-align:center;">λc</div>
<div class="t b" style="left:129px;top:162px;width:62px;text-align:center;">Ordnungs</div>
<div class="t b" style="left:129px;top:177px;width:62px;text-align:center;">abstand</div>
<div class="t b" style="left:129px;top:192px;width:62px;text-align:center;">in</div>
<div class="t b" style="left:129px;top:207px;width:62px;text-align:center;">Angström</div>
<div class="t b" style="left:191px;top:162px;width:62px;text-align:center;">Ordnungs</div>
<div class="t b" style="left:191px;top:177px;width:62px;text-align:center;">abstand</div>
<div class="t b" style="left:191px;top:192px;width:62px;text-align:center;">in</div>
<div class="t b" style="left:191px;top:207px;width:62px;text-align:center;">Pixeln</div>
<div class="t b" style="left:254px;top:192px;width:50px;text-align:left;">Lambda</div>
<div class="t b" style="left:254px;top:207px;width:50px;text-align:left;">(Min)</div>
<div class="t b" style="left:305px;top:192px;width:50px;text-align:left;">Lambda</div>
<div class="t b" style="left:305px;top:207px;width:50px;text-align:left;">(Max)</div>
<div class="t b" style="left:355px;top:162px;width:63px;text-align:center;">Ordnungs</div>
<div class="t b" style="left:355px;top:177px;width:63px;text-align:center;">länge</div>
<div class="t b" style="left:355px;top:192px;width:63px;text-align:center;">in</div>
<div class="t b" style="left:355px;top:207px;width:63px;text-align:center;">Angström</div>
<div class="t b" style="left:418px;top:162px;width:53px;text-align:center;">Dis</div>
<div class="t b" style="left:418px;top:177px;width:53px;text-align:center;">per</div>
<div class="t b" style="left:418px;top:192px;width:53px;text-align:center;">sion</div>
<div class="t b" style="left:418px;top:207px;width:53px;text-align:center;">[A/Pixel]</div>
<div class="t b" style="left:471px;top:162px;width:61px;text-align:center;">freie</div>
<div class="t b" style="left:471px;top:177px;width:61px;text-align:center;">Ordnungs</div>
<div class="t b" style="left:471px;top:192px;width:61px;text-align:center;">länge</div>
<div class="t b" style="left:471px;top:207px;width:61px;text-align:center;">in mm</div>
<div class="t b" style="left:532px;top:162px;width:50px;text-align:center;">Ausreic</div>
<div class="t b" style="left:532px;top:177px;width:50px;text-align:center;">hende</div>
<div class="t b" style="left:532px;top:192px;width:50px;text-align:center;">Überlap</div>
<div class="t b" style="left:532px;top:207px;width:50px;text-align:center;">pung ?</div>
<div class="t b" style="left:582px;top:162px;width:63px;text-align:center;">Über-</div>
<div class="t b" style="left:582px;top:177px;width:63px;text-align:center;">lappung</div>
<div class="t b" style="left:582px;top:192px;width:63px;text-align:center;">in</div>
<div class="t b" style="left:582px;top:207px;width:63px;text-align:center;">Angström</div>
<div class="t b" style="left:645px;top:207px;width:40px;text-align:center;">R</div>
<div class="t b" style="left:685px;top:177px;width:54px;text-align:center;">Signal</div>
<div class="t b" style="left:685px;top:192px;width:54px;text-align:center;">in</div>
<div class="t b" style="left:685px;top:207px;width:54px;text-align:center;">ADU :</div>
<div class="t b" style="left:739px;top:192px;width:41px;text-align:center;">Abtast</div>
<div class="t b" style="left:739px;top:207px;width:41px;text-align:center;">faktor</div>
<div class="t " style="left:26px;top:222px;width:58px;text-align:center;">81</div>
<div class="t " style="left:84px;top:222px;width:45px;text-align:center;">6937</div>
<div class="t " style="left:252px;top:222px;width:52px;text-align:center;">6846</div>
<div class="t " style="left:303px;top:222px;width:52px;text-align:center;">7028</div>
<div class="t " style="left:354px;top:222px;width:64px;text-align:center;">182</div>
<div class="t " style="left:417px;top:222px;width:54px;text-align:center;">0,18</div>
<div class="t " style="left:644px;top:222px;width:38px;text-align:right;">12.997</div>
<div class="t " style="left:684px;top:222px;width:52px;text-align:right;">102.736</div>
<div class="t b" style="left:737px;top:222px;width:41px;text-align:center;color:#f00">1,50</div>
<div class="t " style="left:26px;top:237px;width:58px;text-align:center;">82</div>
<div class="t " style="left:84px;top:237px;width:45px;text-align:center;">6852</div>
<div class="t " style="left:128px;top:237px;width:63px;text-align:center;">85</div>
<div class="t " style="left:190px;top:237px;width:63px;text-align:center;">9,1</div>
<div class="t " style="left:252px;top:237px;width:52px;text-align:center;">6763</div>
<div class="t " style="left:303px;top:237px;width:52px;text-align:center;">6942</div>
<div class="t " style="left:354px;top:237px;width:64px;text-align:center;">180</div>
<div class="t " style="left:417px;top:237px;width:54px;text-align:center;">0,18</div>
<div class="t " style="left:470px;top:237px;width:62px;text-align:center;">6,18</div>
<div class="t " style="left:531px;top:237px;width:51px;text-align:center;">ja</div>
<div class="t " style="left:581px;top:237px;width:64px;text-align:center;">96</div>
<div class="t " style="left:644px;top:237px;width:38px;text-align:right;">12.998</div>
<div class="t " style="left:684px;top:237px;width:52px;text-align:right;">106.430</div>
<div class="t b" style="left:737px;top:237px;width:41px;text-align:center;color:#f00">1,50</div>
<div class="t " style="left:26px;top:252px;width:58px;text-align:center;">83</div>
<div class="t " style="left:84px;top:252px;width:45px;text-align:center;">6770</div>
<div class="t " style="left:128px;top:252px;width:63px;text-align:center;">83</div>
<div class="t " style="left:190px;top:252px;width:63px;text-align:center;">9,2</div>
<div class="t " style="left:252px;top:252px;width:52px;text-align:center;">6681</div>
<div class="t " style="left:303px;top:252px;width:52px;text-align:center;">6859</div>
<div class="t " style="left:354px;top:252px;width:64px;text-align:center;">178</div>
<div class="t " style="left:417px;top:252px;width:54px;text-align:center;">0,17</div>
<div class="t " style="left:470px;top:252px;width:62px;text-align:center;">6,11</div>
<div class="t " style="left:531px;top:252px;width:51px;text-align:center;">ja</div>
<div class="t " style="left:581px;top:252px;width:64px;text-align:center;">96</div>
<div class="t " style="left:644px;top:252px;width:38px;text-align:right;">13.000</div>
<div class="t " style="left:684px;top:252px;width:52px;text-align:right;">110.131</div>
<div class="t b" style="left:737px;top:252px;width:41px;text-align:center;color:#f00">1,50</div>
<div class="t " style="left:26px;top:267px;width:58px;text-align:center;">84</div>
<div class="t " style="left:84px;top:267px;width:45px;text-align:center;">6689</div>
<div class="t " style="left:128px;top:267px;width:63px;text-align:center;">81</div>
<div class="t " style="left:190px;top:267px;width:63px;text-align:center;">9,3</div>
<div class="t " style="left:252px;top:267px;width:52px;text-align:center;">6601</div>
<div class="t " style="left:303px;top:267px;width:52px;text-align:center;">6777</div>
<div class="t " style="left:354px;top:267px;width:64px;text-align:center;">175</div>
<div class="t " style="left:417px;top:267px;width:54px;text-align:center;">0,17</div>
<div class="t " style="left:470px;top:267px;width:62px;text-align:center;">6,03</div>
<div class="t " style="left:531px;top:267px;width:51px;text-align:center;">ja</div>
<div class="t " style="left:581px;top:267px;width:64px;text-align:center;">96</div>
<div class="t " style="left:644px;top:267px;width:38px;text-align:right;">13.002</div>
<div class="t " style="left:684px;top:267px;width:52px;text-align:right;">113.833</div>
<div class="t b" style="left:737px;top:267px;width:41px;text-align:center;color:#f00">1,50</div>
<div class="t " style="left:26px;top:282px;width:58px;text-align:center;">85</div>
<div class="t " style="left:84px;top:282px;width:45px;text-align:center;">6611</div>
<div class="t " style="left:128px;top:282px;width:63px;text-align:center;">79</div>
<div class="t " style="left:190px;top:282px;width:63px;text-align:center;">9,4</div>
<div class="t " style="left:252px;top:282px;width:52px;text-align:center;">6524</div>
<div class="t " style="left:303px;top:282px;width:52px;text-align:center;">6697</div>
<div class="t " style="left:354px;top:282px;width:64px;text-align:center;">173</div>
<div class="t " style="left:417px;top:282px;width:54px;text-align:center;">0,17</div>
<div class="t " style="left:470px;top:282px;width:62px;text-align:center;">5,96</div>
<div class="t " style="left:531px;top:282px;width:51px;text-align:center;">ja</div>
<div class="t " style="left:581px;top:282px;width:64px;text-align:center;">96</div>
<div class="t " style="left:644px;top:282px;width:38px;text-align:right;">13.003</div>
<div class="t " style="left:684px;top:282px;width:52px;text-align:right;">114.470</div>
<div class="t b" style="left:737px;top:282px;width:41px;text-align:center;color:#f00">1,50</div>
<div class="t " style="left:26px;top:297px;width:58px;text-align:center;">86</div>
<div class="t " style="left:84px;top:297px;width:45px;text-align:center;">6534</div>
<div class="t " style="left:128px;top:297px;width:63px;text-align:center;">77</div>
<div class="t " style="left:190px;top:297px;width:63px;text-align:center;">9,5</div>
<div class="t " style="left:252px;top:297px;width:52px;text-align:center;">6448</div>
<div class="t " style="left:303px;top:297px;width:52px;text-align:center;">6619</div>
<div class="t " style="left:354px;top:297px;width:64px;text-align:center;">171</div>
<div class="t " style="left:417px;top:297px;width:54px;text-align:center;">0,17</div>
<div class="t " style="left:470px;top:297px;width:62px;text-align:center;">5,89</div>
<div class="t " style="left:531px;top:297px;width:51px;text-align:center;">ja</div>
<div class="t " style="left:581px;top:297px;width:64px;text-align:center;">96</div>
<div class="t " style="left:644px;top:297px;width:38px;text-align:right;">13.005</div>
<div class="t " style="left:684px;top:297px;width:52px;text-align:right;">118.154</div>
<div class="t b" style="left:737px;top:297px;width:41px;text-align:center;color:#f00">1,50</div>
<div class="t " style="left:26px;top:312px;width:58px;text-align:center;">87</div>
<div class="t " style="left:84px;top:312px;width:45px;text-align:center;">6459</div>
<div class="t " style="left:128px;top:312px;width:63px;text-align:center;">75</div>
<div class="t " style="left:190px;top:312px;width:63px;text-align:center;">9,7</div>
<div class="t " style="left:252px;top:312px;width:52px;text-align:center;">6374</div>
<div class="t " style="left:303px;top:312px;width:52px;text-align:center;">6543</div>
<div class="t " style="left:354px;top:312px;width:64px;text-align:center;">169</div>
<div class="t " style="left:417px;top:312px;width:54px;text-align:center;">0,17</div>
<div class="t " style="left:470px;top:312px;width:62px;text-align:center;">5,82</div>
<div class="t " style="left:531px;top:312px;width:51px;text-align:center;">ja</div>
<div class="t " style="left:581px;top:312px;width:64px;text-align:center;">95</div>
<div class="t " style="left:644px;top:312px;width:38px;text-align:right;">13.007</div>
<div class="t " style="left:684px;top:312px;width:52px;text-align:right;">121.835</div>
<div class="t b" style="left:737px;top:312px;width:41px;text-align:center;color:#f00">1,50</div>
<div class="t " style="left:26px;top:327px;width:58px;text-align:center;">88</div>
<div class="t " style="left:84px;top:327px;width:45px;text-align:center;">6385</div>
<div class="t " style="left:128px;top:327px;width:63px;text-align:center;">73</div>
<div class="t " style="left:190px;top:327px;width:63px;text-align:center;">9,8</div>
<div class="t " style="left:252px;top:327px;width:52px;text-align:center;">6301</div>
<div class="t " style="left:303px;top:327px;width:52px;text-align:center;">6469</div>
<div class="t " style="left:354px;top:327px;width:64px;text-align:center;">167</div>
<div class="t " style="left:417px;top:327px;width:54px;text-align:center;">0,16</div>
<div class="t " style="left:470px;top:327px;width:62px;text-align:center;">5,76</div>
<div class="t " style="left:531px;top:327px;width:51px;text-align:center;">ja</div>
<div class="t " style="left:581px;top:327px;width:64px;text-align:center;">95</div>
<div class="t " style="left:644px;top:327px;width:38px;text-align:right;">13.008</div>
<div class="t " style="left:684px;top:327px;width:52px;text-align:right;">125.511</div>
<div class="t b" style="left:737px;top:327px;width:41px;text-align:center;color:#f00">1,50</div>
<div class="t " style="left:26px;top:342px;width:58px;text-align:center;">89</div>
<div class="t " style="left:84px;top:342px;width:45px;text-align:center;">6313</div>
<div class="t " style="left:128px;top:342px;width:63px;text-align:center;">72</div>
<div class="t " style="left:190px;top:342px;width:63px;text-align:center;">9,9</div>
<div class="t " style="left:252px;top:342px;width:52px;text-align:center;">6231</div>
<div class="t " style="left:303px;top:342px;width:52px;text-align:center;">6396</div>
<div class="t " style="left:354px;top:342px;width:64px;text-align:center;">166</div>
<div class="t " style="left:417px;top:342px;width:54px;text-align:center;">0,16</div>
<div class="t " style="left:470px;top:342px;width:62px;text-align:center;">5,69</div>
<div class="t " style="left:531px;top:342px;width:51px;text-align:center;">ja</div>
<div class="t " style="left:581px;top:342px;width:64px;text-align:center;">95</div>
<div class="t " style="left:644px;top:342px;width:38px;text-align:right;">13.010</div>
<div class="t " style="left:684px;top:342px;width:52px;text-align:right;">126.052</div>
<div class="t b" style="left:737px;top:342px;width:41px;text-align:center;color:#f00">1,50</div>
<div class="t " style="left:26px;top:357px;width:58px;text-align:center;">90</div>
<div class="t " style="left:84px;top:357px;width:45px;text-align:center;">6243</div>
<div class="t " style="left:128px;top:357px;width:63px;text-align:center;">70</div>
<div class="t " style="left:190px;top:357px;width:63px;text-align:center;">10,0</div>
<div class="t " style="left:252px;top:357px;width:52px;text-align:center;">6161</div>
<div class="t " style="left:303px;top:357px;width:52px;text-align:center;">6325</div>
<div class="t " style="left:354px;top:357px;width:64px;text-align:center;">164</div>
<div class="t " style="left:417px;top:357px;width:54px;text-align:center;">0,16</div>
<div class="t " style="left:470px;top:357px;width:62px;text-align:center;">5,63</div>
<div class="t " style="left:531px;top:357px;width:51px;text-align:center;">ja</div>
<div class="t " style="left:581px;top:357px;width:64px;text-align:center;">95</div>
<div class="t " style="left:644px;top:357px;width:38px;text-align:right;">13.011</div>
<div class="t " style="left:684px;top:357px;width:52px;text-align:right;">129.695</div>
<div class="t b" style="left:737px;top:357px;width:41px;text-align:center;color:#f00">1,50</div>
<div class="t " style="left:26px;top:372px;width:58px;text-align:center;">91</div>
<div class="t " style="left:84px;top:372px;width:45px;text-align:center;">6175</div>
<div class="t " style="left:128px;top:372px;width:63px;text-align:center;">69</div>
<div class="t " style="left:190px;top:372px;width:63px;text-align:center;">10,2</div>
<div class="t " style="left:252px;top:372px;width:52px;text-align:center;">6094</div>
<div class="t " style="left:303px;top:372px;width:52px;text-align:center;">6256</div>
<div class="t " style="left:354px;top:372px;width:64px;text-align:center;">162</div>
<div class="t " style="left:417px;top:372px;width:54px;text-align:center;">0,16</div>
<div class="t " style="left:470px;top:372px;width:62px;text-align:center;">5,56</div>
<div class="t " style="left:531px;top:372px;width:51px;text-align:center;">ja</div>
<div class="t " style="left:581px;top:372px;width:64px;text-align:center;">94</div>
<div class="t " style="left:644px;top:372px;width:38px;text-align:right;">13.013</div>
<div class="t " style="left:684px;top:372px;width:52px;text-align:right;">133.326</div>
<div class="t " style="left:737px;top:372px;width:41px;text-align:center;">1,50</div>
<div class="t " style="left:26px;top:387px;width:58px;text-align:center;">92</div>
<div class="t " style="left:84px;top:387px;width:45px;text-align:center;">6108</div>
<div class="t " style="left:128px;top:387px;width:63px;text-align:center;">67</div>
<div class="t " style="left:190px;top:387px;width:63px;text-align:center;">10,3</div>
<div class="t " style="left:252px;top:387px;width:52px;text-align:center;">6027</div>
<div class="t " style="left:303px;top:387px;width:52px;text-align:center;">6188</div>
<div class="t " style="left:354px;top:387px;width:64px;text-align:center;">160</div>
<div class="t " style="left:417px;top:387px;width:54px;text-align:center;">0,16</div>
<div class="t " style="left:470px;top:387px;width:62px;text-align:center;">5,50</div>
<div class="t " style="left:531px;top:387px;width:51px;text-align:center;">ja</div>
<div class="t " style="left:581px;top:387px;width:64px;text-align:center;">94</div>
<div class="t " style="left:644px;top:387px;width:38px;text-align:right;">13.014</div>
<div class="t " style="left:684px;top:387px;width:52px;text-align:right;">133.782</div>
<div class="t " style="left:737px;top:387px;width:41px;text-align:center;">1,50</div>
<div class="t " style="left:26px;top:402px;width:58px;text-align:center;">93</div>
<div class="t " style="left:84px;top:402px;width:45px;text-align:center;">6042</div>
<div class="t " style="left:128px;top:402px;width:63px;text-align:center;">66</div>
<div class="t " style="left:190px;top:402px;width:63px;text-align:center;">10,4</div>
<div class="t " style="left:252px;top:402px;width:52px;text-align:center;">5963</div>
<div class="t " style="left:303px;top:402px;width:52px;text-align:center;">6121</div>
<div class="t " style="left:354px;top:402px;width:64px;text-align:center;">158</div>
<div class="t " style="left:417px;top:402px;width:54px;text-align:center;">0,15</div>
<div class="t " style="left:470px;top:402px;width:62px;text-align:center;">5,44</div>
<div class="t " style="left:531px;top:402px;width:51px;text-align:center;">ja</div>
<div class="t " style="left:581px;top:402px;width:64px;text-align:center;">94</div>
<div class="t " style="left:644px;top:402px;width:38px;text-align:right;">13.015</div>
<div class="t " style="left:684px;top:402px;width:52px;text-align:right;">137.372</div>
<div class="t " style="left:737px;top:402px;width:41px;text-align:center;">1,50</div>
<div class="t " style="left:26px;top:417px;width:58px;text-align:center;">94</div>
<div class="t " style="left:84px;top:417px;width:45px;text-align:center;">5978</div>
<div class="t " style="left:128px;top:417px;width:63px;text-align:center;">64</div>
<div class="t " style="left:190px;top:417px;width:63px;text-align:center;">10,6</div>
<div class="t " style="left:252px;top:417px;width:52px;text-align:center;">5899</div>
<div class="t " style="left:303px;top:417px;width:52px;text-align:center;">6056</div>
<div class="t " style="left:354px;top:417px;width:64px;text-align:center;">157</div>
<div class="t " style="left:417px;top:417px;width:54px;text-align:center;">0,15</div>
<div class="t " style="left:470px;top:417px;width:62px;text-align:center;">5,39</div>
<div class="t " style="left:531px;top:417px;width:51px;text-align:center;">ja</div>
<div class="t " style="left:581px;top:417px;width:64px;text-align:center;">93</div>
<div class="t " style="left:644px;top:417px;width:38px;text-align:right;">13.016</div>
<div class="t " style="left:684px;top:417px;width:52px;text-align:right;">140.943</div>
<div class="t " style="left:737px;top:417px;width:41px;text-align:center;">1,50</div>
<div class="t " style="left:26px;top:432px;width:58px;text-align:center;">95</div>
<div class="t " style="left:84px;top:432px;width:45px;text-align:center;">5915</div>
<div class="t " style="left:128px;top:432px;width:63px;text-align:center;">63</div>
<div class="t " style="left:190px;top:432px;width:63px;text-align:center;">10,7</div>
<div class="t " style="left:252px;top:432px;width:52px;text-align:center;">5837</div>
<div class="t " style="left:303px;top:432px;width:52px;text-align:center;">5992</div>
<div class="t " style="left:354px;top:432px;width:64px;text-align:center;">155</div>
<div class="t " style="left:417px;top:432px;width:54px;text-align:center;">0,15</div>
<div class="t " style="left:470px;top:432px;width:62px;text-align:center;">5,33</div>
<div class="t " style="left:531px;top:432px;width:51px;text-align:center;">ja</div>
<div class="t " style="left:581px;top:432px;width:64px;text-align:center;">93</div>
<div class="t " style="left:644px;top:432px;width:38px;text-align:right;">13.018</div>
<div class="t " style="left:684px;top:432px;width:52px;text-align:right;">141.306</div>
<div class="t " style="left:737px;top:432px;width:41px;text-align:center;">1,50</div>
<div class="t " style="left:26px;top:447px;width:58px;text-align:center;">96</div>
<div class="t " style="left:84px;top:447px;width:45px;text-align:center;">5853</div>
<div class="t " style="left:128px;top:447px;width:63px;text-align:center;">62</div>
<div class="t " style="left:190px;top:447px;width:63px;text-align:center;">10,8</div>
<div class="t " style="left:252px;top:447px;width:52px;text-align:center;">5776</div>
<div class="t " style="left:303px;top:447px;width:52px;text-align:center;">5930</div>
<div class="t " style="left:354px;top:447px;width:64px;text-align:center;">154</div>
<div class="t " style="left:417px;top:447px;width:54px;text-align:center;">0,15</div>
<div class="t " style="left:470px;top:447px;width:62px;text-align:center;">5,27</div>
<div class="t " style="left:531px;top:447px;width:51px;text-align:center;">ja</div>
<div class="t " style="left:581px;top:447px;width:64px;text-align:center;">93</div>
<div class="t " style="left:644px;top:447px;width:38px;text-align:right;">13.019</div>
<div class="t " style="left:684px;top:447px;width:52px;text-align:right;">144.827</div>
<div class="t " style="left:737px;top:447px;width:41px;text-align:center;">1,50</div>
<div class="t " style="left:26px;top:462px;width:58px;text-align:center;">97</div>
<div class="t " style="left:84px;top:462px;width:45px;text-align:center;">5793</div>
<div class="t " style="left:128px;top:462px;width:63px;text-align:center;">60</div>
<div class="t " style="left:190px;top:462px;width:63px;text-align:center;">11,0</div>
<div class="t " style="left:252px;top:462px;width:52px;text-align:center;">5717</div>
<div class="t " style="left:303px;top:462px;width:52px;text-align:center;">5869</div>
<div class="t " style="left:354px;top:462px;width:64px;text-align:center;">152</div>
<div class="t " style="left:417px;top:462px;width:54px;text-align:center;">0,15</div>
<div class="t " style="left:470px;top:462px;width:62px;text-align:center;">5,22</div>
<div class="t " style="left:531px;top:462px;width:51px;text-align:center;">ja</div>
<div class="t " style="left:581px;top:462px;width:64px;text-align:center;">92</div>
<div class="t " style="left:644px;top:462px;width:38px;text-align:right;">13.020</div>
<div class="t " style="left:684px;top:462px;width:52px;text-align:right;">148.325</div>
<div class="t " style="left:737px;top:462px;width:41px;text-align:center;">1,50</div>
<div class="t " style="left:26px;top:477px;width:58px;text-align:center;">98</div>
<div class="t " style="left:84px;top:477px;width:45px;text-align:center;">5734</div>
<div class="t " style="left:128px;top:477px;width:63px;text-align:center;">59</div>
<div class="t " style="left:190px;top:477px;width:63px;text-align:center;">11,1</div>
<div class="t " style="left:252px;top:477px;width:52px;text-align:center;">5658</div>
<div class="t " style="left:303px;top:477px;width:52px;text-align:center;">5809</div>
<div class="t " style="left:354px;top:477px;width:64px;text-align:center;">150</div>
<div class="t " style="left:417px;top:477px;width:54px;text-align:center;">0,15</div>
<div class="t " style="left:470px;top:477px;width:62px;text-align:center;">5,16</div>
<div class="t " style="left:531px;top:477px;width:51px;text-align:center;">ja</div>
<div class="t " style="left:581px;top:477px;width:64px;text-align:center;">92</div>
<div class="t " style="left:644px;top:477px;width:38px;text-align:right;">13.021</div>
<div class="t " style="left:684px;top:477px;width:52px;text-align:right;">148.587</div>
<div class="t " style="left:737px;top:477px;width:41px;text-align:center;">1,50</div>
<div class="t " style="left:26px;top:492px;width:58px;text-align:center;">99</div>
<div class="t " style="left:84px;top:492px;width:45px;text-align:center;">5676</div>
<div class="t " style="left:128px;top:492px;width:63px;text-align:center;">58</div>
<div class="t " style="left:190px;top:492px;width:63px;text-align:center;">11,3</div>
<div class="t " style="left:252px;top:492px;width:52px;text-align:center;">5601</div>
<div class="t " style="left:303px;top:492px;width:52px;text-align:center;">5750</div>
<div class="t " style="left:354px;top:492px;width:64px;text-align:center;">149</div>
<div class="t " style="left:417px;top:492px;width:54px;text-align:center;">0,15</div>
<div class="t " style="left:470px;top:492px;width:62px;text-align:center;">5,11</div>
<div class="t " style="left:531px;top:492px;width:51px;text-align:center;">ja</div>
<div class="t " style="left:581px;top:492px;width:64px;text-align:center;">92</div>
<div class="t " style="left:644px;top:492px;width:38px;text-align:right;">13.022</div>
<div class="t " style="left:684px;top:492px;width:52px;text-align:right;">152.027</div>
<div class="t " style="left:737px;top:492px;width:41px;text-align:center;">1,50</div>
<div class="t " style="left:26px;top:507px;width:58px;text-align:center;">100</div>
<div class="t " style="left:84px;top:507px;width:45px;text-align:center;">5619</div>
<div class="t " style="left:128px;top:507px;width:63px;text-align:center;">57</div>
<div class="t " style="left:190px;top:507px;width:63px;text-align:center;">11,5</div>
<div class="t " style="left:252px;top:507px;width:52px;text-align:center;">5545</div>
<div class="t " style="left:303px;top:507px;width:52px;text-align:center;">5693</div>
<div class="t " style="left:354px;top:507px;width:64px;text-align:center;">147</div>
<div class="t " style="left:417px;top:507px;width:54px;text-align:center;">0,14</div>
<div class="t " style="left:470px;top:507px;width:62px;text-align:center;">5,06</div>
<div class="t " style="left:531px;top:507px;width:51px;text-align:center;">ja</div>
<div class="t " style="left:581px;top:507px;width:64px;text-align:center;">91</div>
<div class="t " style="left:644px;top:507px;width:38px;text-align:right;">13.023</div>
<div class="t " style="left:684px;top:507px;width:52px;text-align:right;">152.221</div>
<div class="t " style="left:737px;top:507px;width:41px;text-align:center;">1,50</div>
<div class="t " style="left:26px;top:522px;width:58px;text-align:center;">101</div>
<div class="t " style="left:84px;top:522px;width:45px;text-align:center;">5563</div>
<div class="t " style="left:128px;top:522px;width:63px;text-align:center;">56</div>
<div class="t " style="left:190px;top:522px;width:63px;text-align:center;">11,6</div>
<div class="t " style="left:252px;top:522px;width:52px;text-align:center;">5490</div>
<div class="t " style="left:303px;top:522px;width:52px;text-align:center;">5636</div>
<div class="t " style="left:354px;top:522px;width:64px;text-align:center;">146</div>
<div class="t " style="left:417px;top:522px;width:54px;text-align:center;">0,14</div>
<div class="t " style="left:470px;top:522px;width:62px;text-align:center;">5,01</div>
<div class="t " style="left:531px;top:522px;width:51px;text-align:center;">ja</div>
<div class="t " style="left:581px;top:522px;width:64px;text-align:center;">91</div>
<div class="t " style="left:644px;top:522px;width:38px;text-align:right;">13.024</div>
<div class="t " style="left:684px;top:522px;width:52px;text-align:right;">155.598</div>
<div class="t " style="left:737px;top:522px;width:41px;text-align:center;">1,50</div>
<div class="t " style="left:26px;top:537px;width:58px;text-align:center;">102</div>
<div class="t " style="left:84px;top:537px;width:45px;text-align:center;">5509</div>
<div class="t " style="left:128px;top:537px;width:63px;text-align:center;">55</div>
<div class="t " style="left:190px;top:537px;width:63px;text-align:center;">11,8</div>
<div class="t " style="left:252px;top:537px;width:52px;text-align:center;">5437</div>
<div class="t " style="left:303px;top:537px;width:52px;text-align:center;">5581</div>
<div class="t " style="left:354px;top:537px;width:64px;text-align:center;">145</div>
<div class="t " style="left:417px;top:537px;width:54px;text-align:center;">0,14</div>
<div class="t " style="left:470px;top:537px;width:62px;text-align:center;">4,96</div>
<div class="t " style="left:531px;top:537px;width:51px;text-align:center;">ja</div>
<div class="t " style="left:581px;top:537px;width:64px;text-align:center;">91</div>
<div class="t " style="left:644px;top:537px;width:38px;text-align:right;">13.025</div>
<div class="t " style="left:684px;top:537px;width:52px;text-align:right;">155.721</div>
<div class="t " style="left:737px;top:537px;width:41px;text-align:center;">1,50</div>
<div class="t " style="left:26px;top:552px;width:58px;text-align:center;">103</div>
<div class="t " style="left:84px;top:552px;width:45px;text-align:center;">5455</div>
<div class="t " style="left:128px;top:552px;width:63px;text-align:center;">53</div>
<div class="t " style="left:190px;top:552px;width:63px;text-align:center;">11,9</div>
<div class="t " style="left:252px;top:552px;width:52px;text-align:center;">5384</div>
<div class="t " style="left:303px;top:552px;width:52px;text-align:center;">5527</div>
<div class="t " style="left:354px;top:552px;width:64px;text-align:center;">143</div>
<div class="t " style="left:417px;top:552px;width:54px;text-align:center;">0,14</div>
<div class="t " style="left:470px;top:552px;width:62px;text-align:center;">4,91</div>
<div class="t " style="left:531px;top:552px;width:51px;text-align:center;">ja</div>
<div class="t " style="left:581px;top:552px;width:64px;text-align:center;">90</div>
<div class="t " style="left:644px;top:552px;width:38px;text-align:right;">13.026</div>
<div class="t " style="left:684px;top:552px;width:52px;text-align:right;">159.031</div>
<div class="t " style="left:737px;top:552px;width:41px;text-align:center;">1,50</div>
<div class="t " style="left:26px;top:567px;width:58px;text-align:center;">104</div>
<div class="t " style="left:84px;top:567px;width:45px;text-align:center;">5403</div>
<div class="t " style="left:128px;top:567px;width:63px;text-align:center;">52</div>
<div class="t " style="left:190px;top:567px;width:63px;text-align:center;">12,1</div>
<div class="t " style="left:252px;top:567px;width:52px;text-align:center;">5332</div>
<div class="t " style="left:303px;top:567px;width:52px;text-align:center;">5474</div>
<div class="t " style="left:354px;top:567px;width:64px;text-align:center;">142</div>
<div class="t " style="left:417px;top:567px;width:54px;text-align:center;">0,14</div>
<div class="t " style="left:470px;top:567px;width:62px;text-align:center;">4,86</div>
<div class="t " style="left:531px;top:567px;width:51px;text-align:center;">ja</div>
<div class="t " style="left:581px;top:567px;width:64px;text-align:center;">90</div>
<div class="t " style="left:644px;top:567px;width:38px;text-align:right;">13.027</div>
<div class="t " style="left:684px;top:567px;width:52px;text-align:right;">159.082</div>
<div class="t " style="left:737px;top:567px;width:41px;text-align:center;">1,50</div>
<div class="t " style="left:26px;top:582px;width:58px;text-align:center;">105</div>
<div class="t " style="left:84px;top:582px;width:45px;text-align:center;">5351</div>
<div class="t " style="left:128px;top:582px;width:63px;text-align:center;">51</div>
<div class="t " style="left:190px;top:582px;width:63px;text-align:center;">12,3</div>
<div class="t " style="left:252px;top:582px;width:52px;text-align:center;">5281</div>
<div class="t " style="left:303px;top:582px;width:52px;text-align:center;">5422</div>
<div class="t " style="left:354px;top:582px;width:64px;text-align:center;">140</div>
<div class="t " style="left:417px;top:582px;width:54px;text-align:center;">0,14</div>
<div class="t " style="left:470px;top:582px;width:62px;text-align:center;">4,82</div>
<div class="t " style="left:531px;top:582px;width:51px;text-align:center;">ja</div>
<div class="t " style="left:581px;top:582px;width:64px;text-align:center;">90</div>
<div class="t " style="left:644px;top:582px;width:38px;text-align:right;">13.028</div>
<div class="t " style="left:684px;top:582px;width:52px;text-align:right;">162.321</div>
<div class="t " style="left:737px;top:582px;width:41px;text-align:center;">1,50</div>
<div class="t " style="left:26px;top:597px;width:58px;text-align:center;">106</div>
<div class="t " style="left:84px;top:597px;width:45px;text-align:center;">5301</div>
<div class="t " style="left:128px;top:597px;width:63px;text-align:center;">50</div>
<div class="t " style="left:190px;top:597px;width:63px;text-align:center;">12,4</div>
<div class="t " style="left:252px;top:597px;width:52px;text-align:center;">5231</div>
<div class="t " style="left:303px;top:597px;width:52px;text-align:center;">5370</div>
<div class="t " style="left:354px;top:597px;width:64px;text-align:center;">139</div>
<div class="t " style="left:417px;top:597px;width:54px;text-align:center;">0,14</div>
<div class="t " style="left:470px;top:597px;width:62px;text-align:center;">4,77</div>
<div class="t " style="left:531px;top:597px;width:51px;text-align:center;">ja</div>
<div class="t " style="left:581px;top:597px;width:64px;text-align:center;">89</div>
<div class="t " style="left:644px;top:597px;width:38px;text-align:right;">13.029</div>
<div class="t " style="left:684px;top:597px;width:52px;text-align:right;">162.298</div>
<div class="t " style="left:737px;top:597px;width:41px;text-align:center;">1,50</div>
<div class="t " style="left:26px;top:612px;width:58px;text-align:center;">107</div>
<div class="t " style="left:84px;top:612px;width:45px;text-align:center;">5251</div>
<div class="t " style="left:128px;top:612px;width:63px;text-align:center;">50</div>
<div class="t " style="left:190px;top:612px;width:63px;text-align:center;">12,6</div>
<div class="t " style="left:252px;top:612px;width:52px;text-align:center;">5182</div>
<div class="t " style="left:303px;top:612px;width:52px;text-align:center;">5320</div>
<div class="t " style="left:354px;top:612px;width:64px;text-align:center;">138</div>
<div class="t " style="left:417px;top:612px;width:54px;text-align:center;">0,13</div>
<div class="t " style="left:470px;top:612px;width:62px;text-align:center;">4,73</div>
<div class="t " style="left:531px;top:612px;width:51px;text-align:center;">ja</div>
<div class="t " style="left:581px;top:612px;width:64px;text-align:center;">89</div>
<div class="t " style="left:644px;top:612px;width:38px;text-align:right;">13.029</div>
<div class="t " style="left:684px;top:612px;width:52px;text-align:right;">165.466</div>
<div class="t " style="left:737px;top:612px;width:41px;text-align:center;">1,50</div>
<div class="t " style="left:26px;top:627px;width:58px;text-align:center;">108</div>
<div class="t " style="left:84px;top:627px;width:45px;text-align:center;">5203</div>
<div class="t " style="left:128px;top:627px;width:63px;text-align:center;">49</div>
<div class="t " style="left:190px;top:627px;width:63px;text-align:center;">12,8</div>
<div class="t " style="left:252px;top:627px;width:52px;text-align:center;">5134</div>
<div class="t " style="left:303px;top:627px;width:52px;text-align:center;">5271</div>
<div class="t " style="left:354px;top:627px;width:64px;text-align:center;">136</div>
<div class="t " style="left:417px;top:627px;width:54px;text-align:center;">0,13</div>
<div class="t " style="left:470px;top:627px;width:62px;text-align:center;">4,68</div>
<div class="t " style="left:531px;top:627px;width:51px;text-align:center;">ja</div>
<div class="t " style="left:581px;top:627px;width:64px;text-align:center;">89</div>
<div class="t " style="left:644px;top:627px;width:38px;text-align:right;">13.030</div>
<div class="t " style="left:684px;top:627px;width:52px;text-align:right;">165.368</div>
<div class="t " style="left:737px;top:627px;width:41px;text-align:center;">1,50</div>
<div class="t " style="left:26px;top:642px;width:58px;text-align:center;">109</div>
<div class="t " style="left:84px;top:642px;width:45px;text-align:center;">5155</div>
<div class="t " style="left:128px;top:642px;width:63px;text-align:center;">48</div>
<div class="t " style="left:190px;top:642px;width:63px;text-align:center;">13,0</div>
<div class="t " style="left:252px;top:642px;width:52px;text-align:center;">5087</div>
<div class="t " style="left:303px;top:642px;width:52px;text-align:center;">5223</div>
<div class="t " style="left:354px;top:642px;width:64px;text-align:center;">135</div>
<div class="t " style="left:417px;top:642px;width:54px;text-align:center;">0,13</div>
<div class="t " style="left:470px;top:642px;width:62px;text-align:center;">4,64</div>
<div class="t " style="left:531px;top:642px;width:51px;text-align:center;">ja</div>
<div class="t " style="left:581px;top:642px;width:64px;text-align:center;">88</div>
<div class="t " style="left:644px;top:642px;width:38px;text-align:right;">13.031</div>
<div class="t " style="left:684px;top:642px;width:52px;text-align:right;">168.456</div>
<div class="t " style="left:737px;top:642px;width:41px;text-align:center;">1,50</div>
<div class="t " style="left:26px;top:657px;width:58px;text-align:center;">110</div>
<div class="t " style="left:84px;top:657px;width:45px;text-align:center;">5108</div>
<div class="t " style="left:128px;top:657px;width:63px;text-align:center;">47</div>
<div class="t " style="left:190px;top:657px;width:63px;text-align:center;">13,2</div>
<div class="t " style="left:252px;top:657px;width:52px;text-align:center;">5041</div>
<div class="t " style="left:303px;top:657px;width:52px;text-align:center;">5175</div>
<div class="t " style="left:354px;top:657px;width:64px;text-align:center;">134</div>
<div class="t " style="left:417px;top:657px;width:54px;text-align:center;">0,13</div>
<div class="t " style="left:470px;top:657px;width:62px;text-align:center;">4,59</div>
<div class="t " style="left:531px;top:657px;width:51px;text-align:center;">ja</div>
<div class="t " style="left:581px;top:657px;width:64px;text-align:center;">88</div>
<div class="t " style="left:644px;top:657px;width:38px;text-align:right;">13.032</div>
<div class="t " style="left:684px;top:657px;width:52px;text-align:right;">168.287</div>
<div class="t " style="left:737px;top:657px;width:41px;text-align:center;">1,50</div>
<div class="t " style="left:26px;top:672px;width:58px;text-align:center;">111</div>
<div class="t " style="left:84px;top:672px;width:45px;text-align:center;">5062</div>
<div class="t " style="left:128px;top:672px;width:63px;text-align:center;">46</div>
<div class="t " style="left:190px;top:672px;width:63px;text-align:center;">13,3</div>
<div class="t " style="left:252px;top:672px;width:52px;text-align:center;">4996</div>
<div class="t " style="left:303px;top:672px;width:52px;text-align:center;">5129</div>
<div class="t " style="left:354px;top:672px;width:64px;text-align:center;">133</div>
<div class="t " style="left:417px;top:672px;width:54px;text-align:center;">0,13</div>
<div class="t " style="left:470px;top:672px;width:62px;text-align:center;">4,55</div>
<div class="t " style="left:531px;top:672px;width:51px;text-align:center;">ja</div>
<div class="t " style="left:581px;top:672px;width:64px;text-align:center;">87</div>
<div class="t " style="left:644px;top:672px;width:38px;text-align:right;">13.033</div>
<div class="t " style="left:684px;top:672px;width:52px;text-align:right;">171.295</div>
<div class="t " style="left:737px;top:672px;width:41px;text-align:center;">1,50</div>
<div class="t " style="left:26px;top:687px;width:58px;text-align:center;">112</div>
<div class="t " style="left:84px;top:687px;width:45px;text-align:center;">5017</div>
<div class="t " style="left:128px;top:687px;width:63px;text-align:center;">45</div>
<div class="t " style="left:190px;top:687px;width:63px;text-align:center;">13,5</div>
<div class="t " style="left:252px;top:687px;width:52px;text-align:center;">4951</div>
<div class="t " style="left:303px;top:687px;width:52px;text-align:center;">5083</div>
<div class="t " style="left:354px;top:687px;width:64px;text-align:center;">132</div>
<div class="t " style="left:417px;top:687px;width:54px;text-align:center;">0,13</div>
<div class="t " style="left:470px;top:687px;width:62px;text-align:center;">4,51</div>
<div class="t " style="left:531px;top:687px;width:51px;text-align:center;">ja</div>
<div class="t " style="left:581px;top:687px;width:64px;text-align:center;">87</div>
<div class="t " style="left:644px;top:687px;width:38px;text-align:right;">13.034</div>
<div class="t " style="left:684px;top:687px;width:52px;text-align:right;">171.051</div>
<div class="t " style="left:737px;top:687px;width:41px;text-align:center;">1,50</div>
<div class="t " style="left:26px;top:702px;width:58px;text-align:center;">113</div>
<div class="t " style="left:84px;top:702px;width:45px;text-align:center;">4973</div>
<div class="t " style="left:128px;top:702px;width:63px;text-align:center;">44</div>
<div class="t " style="left:190px;top:702px;width:63px;text-align:center;">13,7</div>
<div class="t " style="left:252px;top:702px;width:52px;text-align:center;">4907</div>
<div class="t " style="left:303px;top:702px;width:52px;text-align:center;">5038</div>
<div class="t " style="left:354px;top:702px;width:64px;text-align:center;">130</div>
<div class="t " style="left:417px;top:702px;width:54px;text-align:center;">0,13</div>
<div class="t " style="left:470px;top:702px;width:62px;text-align:center;">4,47</div>
<div class="t " style="left:531px;top:702px;width:51px;text-align:center;">ja</div>
<div class="t " style="left:581px;top:702px;width:64px;text-align:center;">87</div>
<div class="t " style="left:644px;top:702px;width:38px;text-align:right;">13.034</div>
<div class="t " style="left:684px;top:702px;width:52px;text-align:right;">168.642</div>
<div class="t " style="left:737px;top:702px;width:41px;text-align:center;">1,50</div>
<div class="t " style="left:26px;top:717px;width:58px;text-align:center;">114</div>
<div class="t " style="left:84px;top:717px;width:45px;text-align:center;">4929</div>
<div class="t " style="left:128px;top:717px;width:63px;text-align:center;">44</div>
<div class="t " style="left:190px;top:717px;width:63px;text-align:center;">13,9</div>
<div class="t " style="left:252px;top:717px;width:52px;text-align:center;">4864</div>
<div class="t " style="left:303px;top:717px;width:52px;text-align:center;">4994</div>
<div class="t " style="left:354px;top:717px;width:64px;text-align:center;">129</div>
<div class="t " style="left:417px;top:717px;width:54px;text-align:center;">0,13</div>
<div class="t " style="left:470px;top:717px;width:62px;text-align:center;">4,43</div>
<div class="t " style="left:531px;top:717px;width:51px;text-align:center;">ja</div>
<div class="t " style="left:581px;top:717px;width:64px;text-align:center;">86</div>
<div class="t " style="left:644px;top:717px;width:38px;text-align:right;">13.035</div>
<div class="t " style="left:684px;top:717px;width:52px;text-align:right;">168.336</div>
<div class="t " style="left:737px;top:717px;width:41px;text-align:center;">1,50</div>
<div class="t " style="left:26px;top:732px;width:58px;text-align:center;">115</div>
<div class="t " style="left:84px;top:732px;width:45px;text-align:center;">4886</div>
<div class="t " style="left:128px;top:732px;width:63px;text-align:center;">43</div>
<div class="t " style="left:190px;top:732px;width:63px;text-align:center;">14,1</div>
<div class="t " style="left:252px;top:732px;width:52px;text-align:center;">4822</div>
<div class="t " style="left:303px;top:732px;width:52px;text-align:center;">4950</div>
<div class="t " style="left:354px;top:732px;width:64px;text-align:center;">128</div>
<div class="t " style="left:417px;top:732px;width:54px;text-align:center;">0,13</div>
<div class="t " style="left:470px;top:732px;width:62px;text-align:center;">4,39</div>
<div class="t " style="left:531px;top:732px;width:51px;text-align:center;">ja</div>
<div class="t " style="left:581px;top:732px;width:64px;text-align:center;">86</div>
<div class="t " style="left:644px;top:732px;width:38px;text-align:right;">13.035</div>
<div class="t " style="left:684px;top:732px;width:52px;text-align:right;">165.871</div>
<div class="t " style="left:737px;top:732px;width:41px;text-align:center;">1,50</div>
<div class="t " style="left:26px;top:747px;width:58px;text-align:center;">116</div>
<div class="t " style="left:84px;top:747px;width:45px;text-align:center;">4844</div>
<div class="t " style="left:128px;top:747px;width:63px;text-align:center;">42</div>
<div class="t " style="left:190px;top:747px;width:63px;text-align:center;">14,4</div>
<div class="t " style="left:252px;top:747px;width:52px;text-align:center;">4780</div>
<div class="t " style="left:303px;top:747px;width:52px;text-align:center;">4907</div>
<div class="t " style="left:354px;top:747px;width:64px;text-align:center;">127</div>
<div class="t " style="left:417px;top:747px;width:54px;text-align:center;">0,12</div>
<div class="t " style="left:470px;top:747px;width:62px;text-align:center;">4,36</div>
<div class="t " style="left:531px;top:747px;width:51px;text-align:center;">ja</div>
<div class="t " style="left:581px;top:747px;width:64px;text-align:center;">85</div>
<div class="t " style="left:644px;top:747px;width:38px;text-align:right;">13.036</div>
<div class="t " style="left:684px;top:747px;width:52px;text-align:right;">165.506</div>
<div class="t " style="left:737px;top:747px;width:41px;text-align:center;">1,50</div>
<div class="t " style="left:26px;top:762px;width:58px;text-align:center;">117</div>
<div class="t " style="left:84px;top:762px;width:45px;text-align:center;">4803</div>
<div class="t " style="left:128px;top:762px;width:63px;text-align:center;">41</div>
<div class="t " style="left:190px;top:762px;width:63px;text-align:center;">14,6</div>
<div class="t " style="left:252px;top:762px;width:52px;text-align:center;">4740</div>
<div class="t " style="left:303px;top:762px;width:52px;text-align:center;">4866</div>
<div class="t " style="left:354px;top:762px;width:64px;text-align:center;">126</div>
<div class="t " style="left:417px;top:762px;width:54px;text-align:center;">0,12</div>
<div class="t " style="left:470px;top:762px;width:62px;text-align:center;">4,32</div>
<div class="t " style="left:531px;top:762px;width:51px;text-align:center;">ja</div>
<div class="t " style="left:581px;top:762px;width:64px;text-align:center;">85</div>
<div class="t " style="left:644px;top:762px;width:38px;text-align:right;">13.037</div>
<div class="t " style="left:684px;top:762px;width:52px;text-align:right;">165.111</div>
<div class="t " style="left:737px;top:762px;width:41px;text-align:center;">1,50</div>
<div class="t " style="left:26px;top:777px;width:58px;text-align:center;">118</div>
<div class="t " style="left:84px;top:777px;width:45px;text-align:center;">4762</div>
<div class="t " style="left:128px;top:777px;width:63px;text-align:center;">41</div>
<div class="t " style="left:190px;top:777px;width:63px;text-align:center;">14,8</div>
<div class="t " style="left:252px;top:777px;width:52px;text-align:center;">4699</div>
<div class="t " style="left:303px;top:777px;width:52px;text-align:center;">4824</div>
<div class="t " style="left:354px;top:777px;width:64px;text-align:center;">125</div>
<div class="t " style="left:417px;top:777px;width:54px;text-align:center;">0,12</div>
<div class="t " style="left:470px;top:777px;width:62px;text-align:center;">4,28</div>
<div class="t " style="left:531px;top:777px;width:51px;text-align:center;">ja</div>
<div class="t " style="left:581px;top:777px;width:64px;text-align:center;">85</div>
<div class="t " style="left:644px;top:777px;width:38px;text-align:right;">13.037</div>
<div class="t " style="left:684px;top:777px;width:52px;text-align:right;">162.574</div>
<div class="t " style="left:737px;top:777px;width:41px;text-align:center;">1,50</div>
<div class="t " style="left:26px;top:792px;width:58px;text-align:center;">119</div>
<div class="t " style="left:84px;top:792px;width:45px;text-align:center;">4722</div>
<div class="t " style="left:128px;top:792px;width:63px;text-align:center;">40</div>
<div class="t " style="left:190px;top:792px;width:63px;text-align:center;">15,0</div>
<div class="t " style="left:252px;top:792px;width:52px;text-align:center;">4660</div>
<div class="t " style="left:303px;top:792px;width:52px;text-align:center;">4784</div>
<div class="t " style="left:354px;top:792px;width:64px;text-align:center;">124</div>
<div class="t " style="left:417px;top:792px;width:54px;text-align:center;">0,12</div>
<div class="t " style="left:470px;top:792px;width:62px;text-align:center;">4,24</div>
<div class="t " style="left:531px;top:792px;width:51px;text-align:center;">ja</div>
<div class="t " style="left:581px;top:792px;width:64px;text-align:center;">84</div>
<div class="t " style="left:644px;top:792px;width:38px;text-align:right;">13.038</div>
<div class="t " style="left:684px;top:792px;width:52px;text-align:right;">162.125</div>
<div class="t " style="left:737px;top:792px;width:41px;text-align:center;">1,50</div>
<div class="t " style="left:26px;top:807px;width:58px;text-align:center;">120</div>
<div class="t " style="left:84px;top:807px;width:45px;text-align:center;">4682</div>
<div class="t " style="left:128px;top:807px;width:63px;text-align:center;">39</div>
<div class="t " style="left:190px;top:807px;width:63px;text-align:center;">15,2</div>
<div class="t " style="left:252px;top:807px;width:52px;text-align:center;">4621</div>
<div class="t " style="left:303px;top:807px;width:52px;text-align:center;">4744</div>
<div class="t " style="left:354px;top:807px;width:64px;text-align:center;">123</div>
<div class="t " style="left:417px;top:807px;width:54px;text-align:center;">0,12</div>
<div class="t " style="left:470px;top:807px;width:62px;text-align:center;">4,21</div>
<div class="t " style="left:531px;top:807px;width:51px;text-align:center;">ja</div>
<div class="t " style="left:581px;top:807px;width:64px;text-align:center;">84</div>
<div class="t " style="left:644px;top:807px;width:38px;text-align:right;">13.039</div>
<div class="t " style="left:684px;top:807px;width:52px;text-align:right;">159.549</div>
<div class="t " style="left:737px;top:807px;width:41px;text-align:center;">1,50</div>
<div class="t " style="left:26px;top:822px;width:58px;text-align:center;">121</div>
<div class="t " style="left:84px;top:822px;width:45px;text-align:center;">4644</div>
<div class="t " style="left:128px;top:822px;width:63px;text-align:center;">39</div>
<div class="t " style="left:190px;top:822px;width:63px;text-align:center;">15,5</div>
<div class="t " style="left:252px;top:822px;width:52px;text-align:center;">4583</div>
<div class="t " style="left:303px;top:822px;width:52px;text-align:center;">4705</div>
<div class="t " style="left:354px;top:822px;width:64px;text-align:center;">122</div>
<div class="t " style="left:417px;top:822px;width:54px;text-align:center;">0,12</div>
<div class="t " style="left:470px;top:822px;width:62px;text-align:center;">4,17</div>
<div class="t " style="left:531px;top:822px;width:51px;text-align:center;">ja</div>
<div class="t " style="left:581px;top:822px;width:64px;text-align:center;">84</div>
<div class="t " style="left:644px;top:822px;width:38px;text-align:right;">13.039</div>
<div class="t " style="left:684px;top:822px;width:52px;text-align:right;">159.052</div>
<div class="t " style="left:737px;top:822px;width:41px;text-align:center;">1,50</div>
<div class="t " style="left:26px;top:837px;width:58px;text-align:center;">122</div>
<div class="t " style="left:84px;top:837px;width:45px;text-align:center;">4606</div>
<div class="t " style="left:128px;top:837px;width:63px;text-align:center;">38</div>
<div class="t " style="left:190px;top:837px;width:63px;text-align:center;">15,7</div>
<div class="t " style="left:252px;top:837px;width:52px;text-align:center;">4545</div>
<div class="t " style="left:303px;top:837px;width:52px;text-align:center;">4666</div>
<div class="t " style="left:354px;top:837px;width:64px;text-align:center;">121</div>
<div class="t " style="left:417px;top:837px;width:54px;text-align:center;">0,12</div>
<div class="t " style="left:470px;top:837px;width:62px;text-align:center;">4,14</div>
<div class="t " style="left:531px;top:837px;width:51px;text-align:center;">ja</div>
<div class="t " style="left:581px;top:837px;width:64px;text-align:center;">83</div>
<div class="t " style="left:644px;top:837px;width:38px;text-align:right;">13.040</div>
<div class="t " style="left:684px;top:837px;width:52px;text-align:right;">158.528</div>
<div class="t " style="left:737px;top:837px;width:41px;text-align:center;">1,50</div>
<div class="t " style="left:26px;top:852px;width:58px;text-align:center;">123</div>
<div class="t " style="left:84px;top:852px;width:45px;text-align:center;">4568</div>
<div class="t " style="left:128px;top:852px;width:63px;text-align:center;">37</div>
<div class="t " style="left:190px;top:852px;width:63px;text-align:center;">15,9</div>
<div class="t " style="left:252px;top:852px;width:52px;text-align:center;">4508</div>
<div class="t " style="left:303px;top:852px;width:52px;text-align:center;">4628</div>
<div class="t " style="left:354px;top:852px;width:64px;text-align:center;">120</div>
<div class="t " style="left:417px;top:852px;width:54px;text-align:center;">0,12</div>
<div class="t " style="left:470px;top:852px;width:62px;text-align:center;">4,11</div>
<div class="t " style="left:531px;top:852px;width:51px;text-align:center;">ja</div>
<div class="t " style="left:581px;top:852px;width:64px;text-align:center;">83</div>
<div class="t " style="left:644px;top:852px;width:38px;text-align:right;">13.040</div>
<div class="t " style="left:684px;top:852px;width:52px;text-align:right;">155.900</div>
<div class="t " style="left:737px;top:852px;width:41px;text-align:center;">1,50</div>
<div style="left:128px;top:221px;width:64px;height:18px;border:2px solid #0a1a6a"></div>
<div style="left:188px;top:235px;width:5px;height:5px;background:#0a1a6a;border:1px solid #fff"></div>
<div style="left:779px;top:158px;width:313px;height:334px;background:#ffcc99"></div>
<div style="left:779px;top:432px;width:313px;height:15px;background:#99ccff"></div>
<div style="left:779px;top:507px;width:313px;height:270px;background:#99ccff"></div>
<div style="left:1034px;top:552px;width:58px;height:15px;background:#ffff00"></div>
<div style="left:779px;top:777px;width:313px;height:15px;background:#ffff00"></div>
<div style="left:779px;top:158px;width:1px;height:334px;background:#000"></div>
<div style="left:1092px;top:158px;width:1px;height:334px;background:#000"></div>
<div style="left:779px;top:222px;width:314px;height:1px;background:#000"></div>
<div style="left:779px;top:237px;width:314px;height:1px;background:#000"></div>
<div style="left:779px;top:252px;width:314px;height:1px;background:#000"></div>
<div style="left:779px;top:267px;width:314px;height:1px;background:#000"></div>
<div style="left:779px;top:282px;width:314px;height:1px;background:#000"></div>
<div style="left:779px;top:297px;width:314px;height:1px;background:#000"></div>
<div style="left:779px;top:312px;width:314px;height:1px;background:#000"></div>
<div style="left:779px;top:327px;width:314px;height:1px;background:#000"></div>
<div style="left:779px;top:342px;width:314px;height:1px;background:#000"></div>
<div style="left:779px;top:357px;width:314px;height:1px;background:#000"></div>
<div style="left:779px;top:372px;width:314px;height:1px;background:#000"></div>
<div style="left:779px;top:387px;width:314px;height:1px;background:#000"></div>
<div style="left:779px;top:402px;width:314px;height:1px;background:#000"></div>
<div style="left:779px;top:417px;width:314px;height:1px;background:#000"></div>
<div style="left:779px;top:432px;width:314px;height:1px;background:#000"></div>
<div style="left:779px;top:447px;width:314px;height:1px;background:#000"></div>
<div style="left:779px;top:462px;width:314px;height:1px;background:#000"></div>
<div style="left:779px;top:477px;width:314px;height:1px;background:#000"></div>
<div style="left:779px;top:492px;width:314px;height:1px;background:#000"></div>
<div style="left:779px;top:507px;width:1px;height:271px;background:#000"></div>
<div style="left:1092px;top:507px;width:1px;height:271px;background:#000"></div>
<div style="left:779px;top:507px;width:314px;height:1px;background:#000"></div>
<div style="left:779px;top:522px;width:314px;height:1px;background:#000"></div>
<div style="left:779px;top:537px;width:314px;height:1px;background:#000"></div>
<div style="left:779px;top:552px;width:314px;height:1px;background:#000"></div>
<div style="left:779px;top:567px;width:314px;height:1px;background:#000"></div>
<div style="left:779px;top:582px;width:314px;height:1px;background:#000"></div>
<div style="left:779px;top:597px;width:314px;height:1px;background:#000"></div>
<div style="left:778px;top:612px;width:316px;height:2px;background:#000"></div>
<div style="left:778px;top:642px;width:316px;height:2px;background:#000"></div>
<div style="left:778px;top:672px;width:316px;height:2px;background:#000"></div>
<div style="left:778px;top:702px;width:316px;height:2px;background:#000"></div>
<div style="left:778px;top:732px;width:316px;height:2px;background:#000"></div>
<div style="left:778px;top:762px;width:316px;height:2px;background:#000"></div>
<div style="left:778px;top:777px;width:316px;height:2px;background:#000"></div>
<svg style="left:1035px;top:538px" width="5" height="5"><path d="M0 0h5L0 5z" fill="#008000"/></svg>
<svg style="left:1035px;top:553px" width="5" height="5"><path d="M0 0h5L0 5z" fill="#008000"/></svg>
<div class="b" style="left:865px;top:174px;font-size:13px;line-height:20px;color:#0000ff;text-decoration:underline;white-space:nowrap;letter-spacing:0.25px">Eingabeparameter</div>
<div class="t b" style="left:700px;top:207px;width:332px;text-align:right;">Pixelabmessung CCD (p) :</div>
<div class="t b" style="left:1034px;top:207px;width:57px;text-align:right;">13</div>
<div class="t b" style="left:700px;top:222px;width:332px;text-align:right;">Pixelanzahl CCD (Nx) :</div>
<div class="t b" style="left:1034px;top:222px;width:57px;text-align:right;">1024</div>
<div class="t b" style="left:700px;top:237px;width:332px;text-align:right;">Pixelanzahl CCD (Ny) :</div>
<div class="t b" style="left:1034px;top:237px;width:57px;text-align:right;">1024</div>
<div class="t b" style="left:700px;top:252px;width:332px;text-align:right;">Objektiv-Durchmesser (D) :</div>
<div class="t b" style="left:1034px;top:252px;width:57px;text-align:right;">250</div>
<div class="t b" style="left:700px;top:267px;width:332px;text-align:right;">Teleskop-Brennweite (F) :</div>
<div class="t b" style="left:1034px;top:267px;width:57px;text-align:right;">2000</div>
<div class="t b" style="left:700px;top:282px;width:332px;text-align:right;">Spaltbreite in µm :</div>
<div class="t b" style="left:1034px;top:282px;width:57px;text-align:right;">40,0</div>
<div class="t b" style="left:700px;top:295px;width:332px;text-align:right;">Binning in Dispersionsrichtung (fλ) :</div>
<div class="t b" style="left:1034px;top:297px;width:57px;text-align:right;">1</div>
<div class="t b" style="left:700px;top:312px;width:332px;text-align:right;">Kollimator-Brennweite (f1) :</div>
<div class="t b" style="left:1034px;top:312px;width:57px;text-align:right;">125</div>
<div class="t b" style="left:700px;top:327px;width:332px;text-align:right;">Kamera-Brennweite (f2) :</div>
<div class="t b" style="left:1034px;top:327px;width:57px;text-align:right;">158</div>
<div class="t b" style="left:700px;top:342px;width:332px;text-align:right;">Seeing in Bogensekekunden (ϕ) :</div>
<div class="t b" style="left:1034px;top:342px;width:57px;text-align:right;">4</div>
<div class="t b" style="left:700px;top:357px;width:332px;text-align:right;">Liniendichte Echelle in Linien/mm :</div>
<div class="t b" style="left:1034px;top:357px;width:57px;text-align:right;">31,6</div>
<div class="t b" style="left:700px;top:372px;width:332px;text-align:right;">theta :</div>
<div class="t b" style="left:1034px;top:372px;width:57px;text-align:right;">7</div>
<div class="t b" style="left:700px;top:387px;width:332px;text-align:right;">gamma :</div>
<div class="t b" style="left:1034px;top:387px;width:57px;text-align:right;">0</div>
<div class="t b" style="left:700px;top:402px;width:332px;text-align:right;">Blazewinkel :</div>
<div class="t b" style="left:1034px;top:402px;width:57px;text-align:right;">63,4394</div>
<div class="t b" style="left:700px;top:417px;width:332px;text-align:right;">Linien/mm Cross Disperser :</div>
<div class="t b" style="left:1034px;top:417px;width:57px;text-align:right;">150</div>
<div class="t b" style="left:700px;top:432px;width:332px;text-align:right;">Abstand Echelle bis Cross Disperser :</div>
<div class="t b" style="left:1034px;top:432px;width:57px;text-align:right;">64,6</div>
<div class="t b" style="left:700px;top:447px;width:332px;text-align:right;">Abstand Cross Disperser bis Kameralinse :</div>
<div class="t b" style="left:1034px;top:447px;width:57px;text-align:right;">20</div>
<div class="t b" style="left:700px;top:462px;width:332px;text-align:right;">Baulänge des Kameraobjektives :</div>
<div class="t b" style="left:1034px;top:462px;width:57px;text-align:right;">155,6</div>
<div class="t b" style="left:700px;top:477px;width:332px;text-align:right;">Totaler Winkel Cross Disperser (Gitter) :</div>
<div class="t b" style="left:1034px;top:477px;width:57px;text-align:right;">5</div>
<div class="t b" style="left:700px;top:522px;width:332px;text-align:right;">Beugungswinkel (Blazewinkel - Theta) :</div>
<div class="t b" style="left:1034px;top:522px;width:57px;text-align:right;">56,4</div>
<div class="t b" style="left:700px;top:537px;width:332px;text-align:right;">Minimaler Abtast-Faktor :</div>
<div class="t b" style="left:1034px;top:537px;width:57px;text-align:right;">1,50</div>
<div class="t b" style="left:700px;top:552px;width:332px;text-align:right;">Maximaler Abtast-Faktor :</div>
<div class="t b" style="left:1034px;top:552px;width:57px;text-align:right;color:#f00">1,50</div>
<div class="t b" style="left:700px;top:567px;width:332px;text-align:right;">F/D (F-Zahl) des Teleskopes :</div>
<div class="t b" style="left:1034px;top:567px;width:57px;text-align:right;">8,0</div>
<div class="t b" style="left:700px;top:582px;width:332px;text-align:right;">Seeingscheibchen :</div>
<div class="t b" style="left:1034px;top:582px;width:57px;text-align:right;">38,8</div>
<div class="t b" style="left:700px;top:597px;width:332px;text-align:right;letter-spacing:0.35px">Mindest-Durchmesser Kollimator in mm :</div>
<div class="t b" style="left:1034px;top:597px;width:57px;text-align:right;">15,6</div>
<div class="t b" style="left:700px;top:612px;width:332px;text-align:right;letter-spacing:0.22px">Maximale Bildtiefe Kollimator in µm :</div>
<div class="t b" style="left:1034px;top:612px;width:57px;text-align:right;">620,6</div>
<div class="t b" style="left:700px;top:627px;width:332px;text-align:right;letter-spacing:0.22px">Maximale Bildtiefe Kamera in µm :</div>
<div class="t b" style="left:1034px;top:627px;width:57px;text-align:right;">104,0</div>
<div class="t b" style="left:700px;top:642px;width:332px;text-align:right;">notw. CCD-Abmessung (x-Richtung) in mm :</div>
<div class="t b" style="left:1034px;top:642px;width:57px;text-align:right;">6,18</div>
<div class="t b" style="left:700px;top:657px;width:332px;text-align:right;">notw. CCD-Abmessung (y-Richtung) in mm :</div>
<div class="t b" style="left:1034px;top:657px;width:57px;text-align:right;">10,68</div>
<div class="t b" style="left:700px;top:672px;width:332px;text-align:right;letter-spacing:0.38px">Mindest-Gitterbreite in mm :</div>
<div class="t b" style="left:1034px;top:672px;width:57px;text-align:right;">15,6</div>
<div class="t b" style="left:700px;top:687px;width:332px;text-align:right;">Mindest-Gitterlänge in mm :</div>
<div class="t b" style="left:1034px;top:687px;width:57px;text-align:right;">46,7</div>
<div class="t b" style="left:700px;top:702px;width:332px;text-align:right;">Notw. Durchm. Cross Disperser in mm :</div>
<div class="t b" style="left:1034px;top:702px;width:57px;text-align:right;">31,3</div>
<div class="t b" style="left:700px;top:717px;width:332px;text-align:right;">Notwendige F-Zahl des Kameraobjektivs :</div>
<div class="t b" style="left:1034px;top:717px;width:57px;text-align:right;">4,00</div>
<div class="t b" style="left:700px;top:732px;width:332px;text-align:right;letter-spacing:0.15px">Gesichtfeld der Kamera in Grad (x-Richtung) :</div>
<div class="t b" style="left:1034px;top:732px;width:57px;text-align:right;">2,24</div>
<div class="t b" style="left:700px;top:747px;width:332px;text-align:right;letter-spacing:0.15px">Gesichtfeld der Kamera in Grad (y-Richtung) :</div>
<div class="t b" style="left:1034px;top:747px;width:57px;text-align:right;">3,87</div>
<div class="t b" style="left:700px;top:762px;width:332px;text-align:right;letter-spacing:0.22px">Maximale Spaltlänge in µm :</div>
<div class="t b" style="left:1034px;top:762px;width:57px;text-align:right;">93,6</div>
<div class="b" style="left:865px;top:507px;height:15px;line-height:15px;font-size:13px;color:#f00;text-decoration:underline;white-space:nowrap;letter-spacing:0.2px">Ausgabeparameter</div>
<div class="t b" style="left:781px;top:777px;width:419px;text-align:left;color:#f00">Parameter in kritischen Bereichen werden rot dargestellt !</div>
<div style="left:1092px;top:158px;width:60px;height:94px;background:#ffcc99"></div>
<div style="left:1152px;top:158px;width:1px;height:94px;background:#000"></div>
<div style="left:1092px;top:222px;width:60px;height:1px;background:#000"></div>
<div style="left:1092px;top:237px;width:60px;height:1px;background:#000"></div>
<div style="left:1092px;top:252px;width:60px;height:1px;background:#000"></div>
<div class="t b" style="left:1094px;top:177px;width:58px;text-align:left;">CCD-</div>
<div class="t b" style="left:1094px;top:192px;width:58px;text-align:left;">Abmess-</div>
<div class="t b" style="left:1094px;top:207px;width:58px;text-align:left;">ungen</div>
<div class="t b" style="left:1092px;top:222px;width:58px;text-align:right;">13,31</div>
<div class="t b" style="left:1092px;top:237px;width:58px;text-align:right;">13,31</div>
<div style="left:1152px;top:158px;width:240px;height:64px;background:#00ff00"></div>
<div style="left:1152px;top:222px;width:240px;height:15px;background:#ffcc99"></div>
<div style="left:1152px;top:237px;width:240px;height:75px;background:#00ff00"></div>
<div style="left:1232px;top:158px;width:1px;height:79px;background:#000"></div>
<div style="left:1312px;top:158px;width:1px;height:79px;background:#000"></div>
<div style="left:1392px;top:158px;width:1px;height:154px;background:#000"></div>
<div style="left:1152px;top:222px;width:241px;height:1px;background:#000"></div>
<div style="left:1152px;top:237px;width:241px;height:1px;background:#000"></div>
<div class="t b" style="left:1154px;top:162px;width:78px;text-align:left;"><u>Eingabe:</u></div>
<div class="t b" style="left:1154px;top:192px;width:78px;text-align:left;">kleinste</div>
<div class="t b" style="left:1154px;top:207px;width:78px;text-align:left;">Ordnung</div>
<div class="t b" style="left:1234px;top:162px;width:78px;text-align:left;"><u>Eingabe:</u></div>
<div class="t b" style="left:1234px;top:192px;width:78px;text-align:left;">größte</div>
<div class="t b" style="left:1234px;top:207px;width:78px;text-align:left;">Ordnung</div>
<div class="t b" style="left:1314px;top:192px;width:78px;text-align:left;">Anzahl</div>
<div class="t b" style="left:1314px;top:207px;width:78px;text-align:left;">Ordnungen</div>
<div class="t b" style="left:1152px;top:222px;width:78px;text-align:right;">81</div>
<div class="t b" style="left:1232px;top:222px;width:78px;text-align:right;">140</div>
<div class="t b" style="left:1312px;top:222px;width:78px;text-align:right;">59</div>
<div class="t b" style="left:1154px;top:237px;width:346px;text-align:left;color:#f00">Es werden max. 80 Ordnungen angezeigt !</div>
<div class="t b" style="left:1154px;top:267px;width:346px;text-align:left;color:#f00">Bei 31,6 Linien/mm z.B. Ordn. 80 bis 160</div>
<div class="t b" style="left:1154px;top:282px;width:346px;text-align:left;color:#f00">Bei 79,0 Linien/mm z.B. Ordn. 20 bis 65</div>
<div style="left:1152px;top:312px;width:160px;height:60px;background:#99ccff"></div>
<div style="left:1312px;top:312px;width:80px;height:60px;background:#ff0000"></div>
<div style="left:1151px;top:311px;width:243px;height:63px;border:2px solid #000"></div>
<div class="t b" style="left:1154px;top:312px;width:158px;text-align:left;letter-spacing:0.55px">Cross Disperser:</div>
<div class="t b" style="left:1154px;top:327px;width:158px;text-align:left;letter-spacing:0.5px">Glassorte =</div>
<div class="t b" style="left:1154px;top:342px;width:158px;text-align:left;">Prismenwinkel <span style="color:#f00">γ =</span></div>
<div class="t b" style="left:1154px;top:356px;width:158px;text-align:left;">Einfallswinkel <span style="color:#f00">α1 =</span></div>
<div class="t b" style="left:1314px;top:312px;width:78px;text-align:left;color:#fff;font-size:12px">Prisma</div>
<div class="t b" style="left:1314px;top:327px;width:78px;text-align:left;color:#fff;font-size:12px">N-F2</div>
<div class="t b" style="left:1314px;top:342px;width:78px;text-align:left;color:#fff;font-size:12px">60,0</div>
<div class="t b" style="left:1314px;top:356px;width:78px;text-align:left;color:#fff;font-size:12px">55,6</div>
<div style="left:1152px;top:373px;width:240px;height:74px;background:#99ccff"></div>
<div style="left:1151px;top:372px;width:243px;height:76px;border:2px solid #000"></div>
<div class="t b" style="left:1154px;top:372px;width:158px;text-align:left;">Notw. Prismenlänge in mm =</div>
<div class="t b" style="left:1314px;top:372px;width:78px;text-align:left;">31,2</div>
<div class="t b" style="left:1154px;top:387px;width:158px;text-align:left;">Notw. Kathete in mm =</div>
<div class="t b" style="left:1314px;top:387px;width:78px;text-align:left;">27,7</div>
<div class="t " style="left:1154px;top:402px;width:158px;text-align:left;">min. Ausfallswinkel <span style="color:#f00">α<span style="font-size:9px">2</span> =</span></div>
<div class="t " style="left:1314px;top:402px;width:78px;text-align:left;">51,9</div>
<div class="t " style="left:1154px;top:417px;width:158px;text-align:left;">max. Ausfallswinkel <span style="color:#f00">α<span style="font-size:9px">2</span> =</span></div>
<div class="t " style="left:1314px;top:417px;width:78px;text-align:left;">56,0</div>
<div class="t " style="left:1154px;top:431px;width:158px;text-align:left;">Fraunhoferw. <span style="color:#f00">α<span style="font-size:9px">1</span>&nbsp; bei 550nm =</span></div>
<div class="t " style="left:1314px;top:432px;width:78px;text-align:left;">54,3</div>
<div style="left:1152px;top:477px;width:160px;height:15px;background:#99ccff"></div>
<div style="left:1152px;top:477px;width:161px;height:16px;border:1px solid #000"></div>
<div style="left:1171px;top:477px;height:15px;line-height:15px;font-size:13px;letter-spacing:0.3px;white-space:nowrap">Gitter = R 2</div>
<div style="left:1152px;top:612px;width:160px;height:30px;background:#99ccff"></div>
<div style="left:1152px;top:612px;width:161px;height:31px;border:1px solid #000"></div>
<div style="left:1232px;top:612px;width:1px;height:30px;background:#000"></div>
<div class="t b" style="left:1152px;top:612px;width:78px;text-align:right;">FWHMt</div>
<div class="t b" style="left:1152px;top:627px;width:78px;text-align:right;">38,9</div>
<div class="t b" style="left:1232px;top:612px;width:78px;text-align:right;">Abstand CD</div>
<div class="t b" style="left:1232px;top:627px;width:78px;text-align:right;">64,6</div>
<div style="left:1152px;top:657px;width:161px;height:121px;background:#ff0000"></div>
<div style="left:1152px;top:657px;width:161px;height:121px;border:1px solid #000"></div>
<div style="left:1155px;top:670px;width:153px;height:97px;background:#8fa8a0;border-top:1px solid #e0e8e4;border-left:1px solid #e0e8e4;border-right:2px solid #1a2a26;border-bottom:2px solid #1a2a26"></div>
<div class="b" style="left:1157px;top:685px;width:153px;height:17px;line-height:17px;text-align:center;font-size:13px;letter-spacing:0.3px;color:#f00;text-decoration:underline;white-space:nowrap">Nach jeder&nbsp;</div>
<div class="b" style="left:1157px;top:702px;width:153px;height:17px;line-height:17px;text-align:center;font-size:13px;letter-spacing:0.3px;color:#f00;text-decoration:underline;white-space:nowrap">Parameteränderung&nbsp;</div>
<div class="b" style="left:1157px;top:719px;width:153px;height:17px;line-height:17px;text-align:center;font-size:13px;letter-spacing:0.3px;color:#f00;text-decoration:underline;white-space:nowrap">Programm mit diesem&nbsp;</div>
<div class="b" style="left:1157px;top:736px;width:153px;height:17px;line-height:17px;text-align:center;font-size:13px;letter-spacing:0.3px;color:#f00;text-decoration:underline;white-space:nowrap">Knopf starten</div>
<div style="left:1423px;top:142px;width:15px;height:722px;background:repeating-conic-gradient(#93b1a5 0 25%,#d3e2db 0 50%) 0 0/2px 2px"></div>
<div style="left:1423px;top:142px;width:15px;height:6px;background:#a6bfb5;border-bottom:1px solid #1a2a26"></div>
<div style="left:1423px;top:148px;width:15px;height:16px;background:#8fa8a0;border-top:1px solid #e0e8e4;border-left:1px solid #e0e8e4;border-right:1px solid #1a2a26;border-bottom:1px solid #1a2a26"></div>
<svg style="left:1428px;top:153px" width="7" height="4"><path d="M0 4h7L3.5 0z" fill="#000"/></svg>
<div style="left:1423px;top:164px;width:15px;height:304px;background:#8fa8a0;border-top:1px solid #e0e8e4;border-left:1px solid #e0e8e4;border-right:1px solid #1a2a26;border-bottom:1px solid #1a2a26"></div>
<div style="left:1423px;top:848px;width:15px;height:16px;background:#8fa8a0;border-top:1px solid #e0e8e4;border-left:1px solid #e0e8e4;border-right:1px solid #1a2a26;border-bottom:1px solid #1a2a26"></div>
<svg style="left:1428px;top:854px" width="7" height="4"><path d="M0 0h7L3.5 4z" fill="#000"/></svg>
<div style="left:0px;top:864px;width:1440px;height:16px;background:#93aba1"></div>
<svg style="left:5px;top:868px" width="7" height="9"><path d="M0.5 0v8M6 0L1.5 4 6 8z" fill="#000" stroke="#000" stroke-width=".6"/></svg>
<svg style="left:22px;top:868px" width="7" height="9"><path d="M5 0L0.5 4 5 8z" fill="#000" stroke="#000" stroke-width=".6"/></svg>
<svg style="left:37px;top:868px" width="7" height="9"><path d="M0.5 0L5 4 0.5 8z" fill="#000" stroke="#000" stroke-width=".6"/></svg>
<svg style="left:52px;top:868px" width="7" height="9"><path d="M5.5 0v8M0 0L4.5 4 0 8z" fill="#000" stroke="#000" stroke-width=".6"/></svg>
<div style="left:1px;top:864px;width:1px;height:15px;background:#1a2a26"></div>
<svg style="left:62px;top:864px" width="126" height="16"><path d="M0.5 0 L6.5 15 H119.5 L125.5 0 Z" fill="#fff"/><path d="M0.5 0 L6.5 15 M119.5 15 L125.5 0" fill="none" stroke="#000"/></svg>
<div class="b" style="left:70px;top:864px;height:15px;line-height:15px;font-size:11px;letter-spacing:0.55px;white-space:nowrap">Echelle-Parameter</div>
<div style="left:188px;top:864px;height:15px;line-height:15px;font-size:10.6px;white-space:nowrap">Ordnung</div>
<div style="left:258px;top:864px;height:15px;line-height:15px;font-size:10.6px;white-space:nowrap">Farblängsfehler Kollimator</div>
<div style="left:416px;top:864px;height:15px;line-height:15px;font-size:10.6px;white-space:nowrap">CrossDisperser(Gitter)</div>
<div style="left:556px;top:864px;height:15px;line-height:15px;font-size:10.6px;white-space:nowrap">CrossDisperser(Prisma)</div>
<div style="left:700px;top:864px;height:15px;line-height:15px;font-size:10.6px;white-space:nowrap">Farblängsfehler Kamera</div>
<div style="left:840px;top:864px;height:15px;line-height:15px;font-size:10.6px;white-space:nowrap">Eff</div>
<svg style="left:182px;top:864px" width="8" height="16"><path d="M0 15 L6 0" stroke="#000"/></svg>
<svg style="left:244px;top:864px" width="8" height="16"><path d="M0 15 L6 0" stroke="#000"/></svg>
<svg style="left:400px;top:864px" width="8" height="16"><path d="M0 15 L6 0" stroke="#000"/></svg>
<svg style="left:538px;top:864px" width="8" height="16"><path d="M0 15 L6 0" stroke="#000"/></svg>
<svg style="left:683px;top:864px" width="8" height="16"><path d="M0 15 L6 0" stroke="#000"/></svg>
<svg style="left:827px;top:864px" width="8" height="16"><path d="M0 15 L6 0" stroke="#000"/></svg>
<div style="left:859px;top:864px;width:1px;height:16px;background:#000"></div>
<div style="left:861px;top:865px;width:15px;height:14px;background:#8fa8a0;border-top:1px solid #e0e8e4;border-left:1px solid #e0e8e4;border-right:1px solid #1a2a26;border-bottom:1px solid #1a2a26"></div>
<svg style="left:866px;top:868px" width="4" height="7"><path d="M4 0v7L0 3.5z" fill="#000"/></svg>
<div style="left:876px;top:865px;width:527px;height:14px;background:repeating-conic-gradient(#93b1a5 0 25%,#d3e2db 0 50%) 0 0/2px 2px"></div>
<div style="left:876px;top:865px;width:218px;height:14px;background:#8fa8a0;border-top:1px solid #e0e8e4;border-left:1px solid #e0e8e4;border-right:1px solid #1a2a26;border-bottom:1px solid #1a2a26"></div>
<div style="left:1403px;top:865px;width:15px;height:14px;background:#8fa8a0;border-top:1px solid #e0e8e4;border-left:1px solid #e0e8e4;border-right:1px solid #1a2a26;border-bottom:1px solid #1a2a26"></div>
<div style="left:860px;top:864px;width:1px;height:15px;background:#000"></div>
<div style="left:876px;top:864px;width:1px;height:15px;background:#000"></div>
<div style="left:1417px;top:864px;width:1px;height:15px;background:#000"></div>
<div style="left:1423px;top:864px;width:17px;height:15px;border-top:2px solid #000;border-left:2px solid #000"></div>
<svg style="left:1408px;top:868px" width="4" height="7"><path d="M0 0v7L4 3.5z" fill="#000"/></svg>
<div style="left:0px;top:880px;width:1440px;height:20px;background:#93aca3"></div>
<div style="left:0px;top:880px;width:1440px;height:1px;background:#c5d6ce"></div>
<div style="left:4px;top:884px;height:16px;line-height:16px;font-size:11px">Bereit</div>
<div style="left:1136px;top:883px;width:32px;height:15px;border:1px solid #b5c8c0"></div>
<div style="left:1170px;top:883px;width:105px;height:15px;border:1px solid #b5c8c0"></div>
<div style="left:1277px;top:883px;width:24px;height:15px;border:1px solid #b5c8c0"></div>
<div style="left:1303px;top:883px;width:40px;height:15px;border:1px solid #b5c8c0"></div>
<div style="left:1345px;top:883px;width:20px;height:15px;border:1px solid #b5c8c0"></div>
<div style="left:1367px;top:883px;width:23px;height:15px;border:1px solid #b5c8c0"></div>
<div style="left:1392px;top:883px;width:21px;height:15px;border:1px solid #b5c8c0"></div>
<div style="left:1415px;top:883px;width:25px;height:15px;border:1px solid #b5c8c0"></div>
</body></html>
